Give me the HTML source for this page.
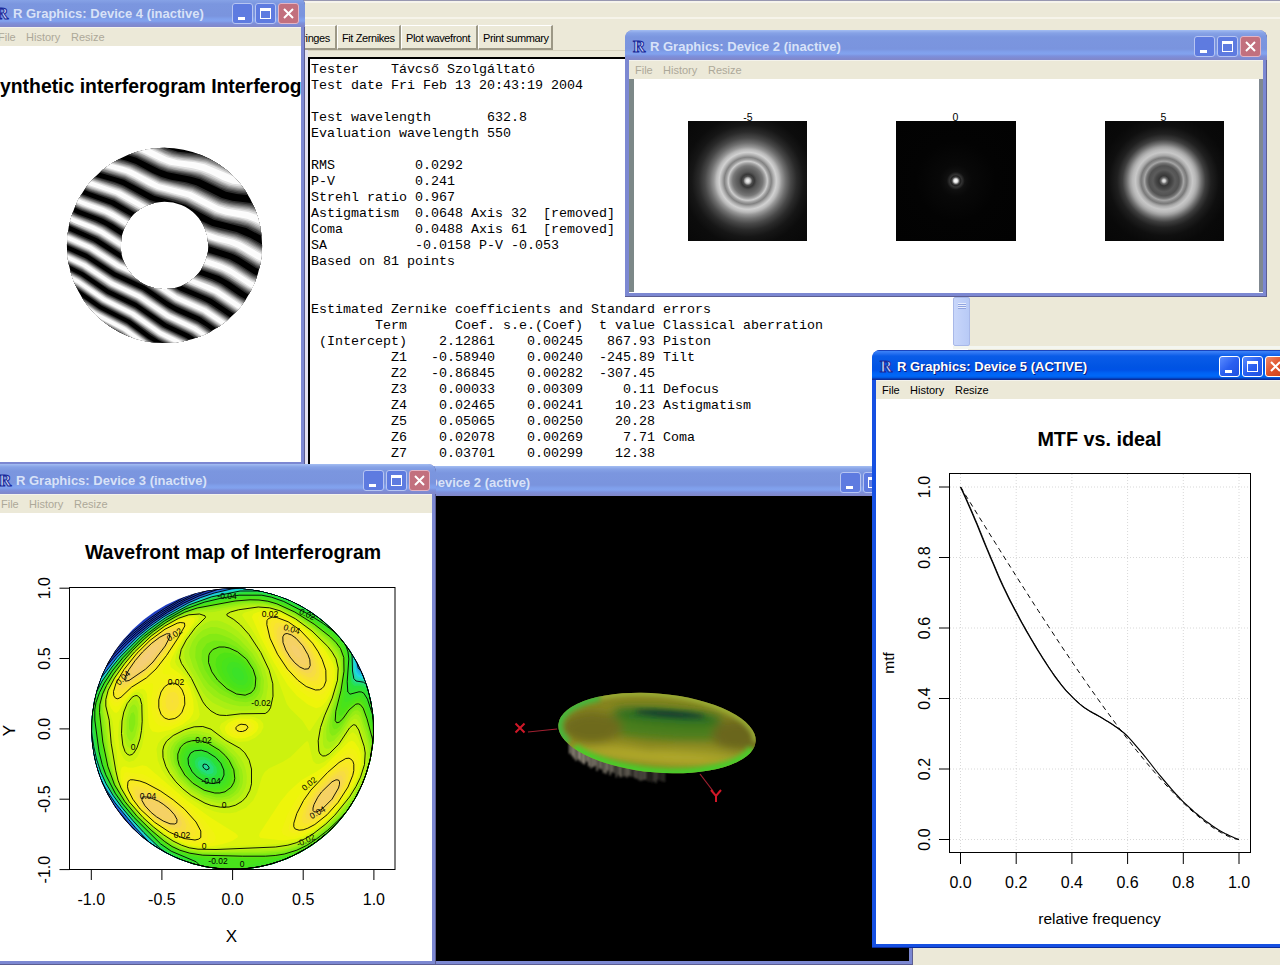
<!DOCTYPE html><html><head><meta charset="utf-8"><style>*{margin:0;padding:0;box-sizing:border-box}
html,body{width:1280px;height:965px;overflow:hidden;background:#ECE9D8;font-family:"Liberation Sans",sans-serif;position:relative}
.a{position:absolute}
.win{position:absolute;overflow:hidden;border-radius:8px 8px 0 0}
.win.in{background:#7C88D2;box-shadow:inset -1px -1px 0 #5C5E92}
.win.ac{background:#1650E2;box-shadow:inset -1px -1px 0 #0A2A9A}
.tb{position:absolute;left:0;right:0;top:0;height:30px;border-radius:7px 7px 0 0}
.in .tb{background:linear-gradient(#A4BEF2 0px,#9AB4EE 1px,#86A2E6 3px,#7B96DF 7px,#7A94DE 19px,#80A0EC 22px,#82A2EE 24px,#7D90DC 26px,#8088CC 29px,#8088CC 30px)}
.ac .tb{background:linear-gradient(#1A44BE 0px,#1A44BE 1px,#3D84F8 1px,#2C74F2 3px,#0A5CE8 6px,#0054E3 17px,#0052E6 20px,#0062F4 23px,#0068F8 26px,#0054DC 28px,#0A2E9C 29px,#0A2E9C 30px)}
.ttl{position:absolute;left:25px;top:9px;font-weight:bold;font-size:13px;line-height:16px;white-space:nowrap}
.in .ttl{color:#D8E2F8}
.ac .ttl{color:#fff;text-shadow:1px 1px 0 #0A1A7A}
.ico{position:absolute;left:7px;top:8px;width:16px;height:16px}
.bt{position:absolute;top:6px;width:21px;height:21px;border-radius:3px}
.in .bt{background:#5E7BE0;border:1px solid #B7C5F2}
.in .bt.cl{background:#C2707E;border:1px solid #E2B4C4}
.ac .bt{background:linear-gradient(135deg,#5A8CFF,#2A5FF0 50%,#1F50E0);border:1px solid #fff}
.ac .bt.cl{background:linear-gradient(135deg,#F08A6A,#E0522A 50%,#C8401C);border:1px solid #fff}
.mn{position:absolute;left:4px;right:4px;top:30px;height:19px;background:#ECE9D8;border-top:1px solid #F4F3EC;font-size:11px;white-space:nowrap}
.mn span{position:absolute;top:3px;line-height:13px}
.in .mn span{color:#ACA899}
.ac .mn span{color:#000}
.ct{position:absolute;left:4px;right:4px;top:49px;bottom:4px;background:#fff;overflow:hidden}
.mono{font-family:"Liberation Mono",monospace;font-size:13.33px;line-height:16px;white-space:pre;position:absolute;color:#000}
.xb{position:absolute;top:25px;height:25px;background:#ECE9D8;border-right:2px solid #9C9886;border-bottom:2px solid #9C9886;border-left:1px solid #fff;border-top:1px solid #fff;font-size:11px;line-height:24px;padding-left:4px;letter-spacing:-0.4px;white-space:nowrap;color:#000;overflow:hidden}
</style></head><body><div class="a" style="left:0;top:0;width:1280px;height:1px;background:#9898B0"></div>
<div class="a" style="left:0;top:1px;width:1280px;height:2px;background:#F6F4EC"></div>
<div class="a" style="left:0;top:17px;width:1280px;height:2px;background:#F6F4EA"></div>
<div class="a" style="left:290px;top:50px;width:680px;height:1px;background:#D8D4C0"></div>
<div class="xb" style="left:291px;width:46px">Fringes</div>
<div class="xb" style="left:337px;width:64px">Fit Zernikes</div>
<div class="xb" style="left:401px;width:77px">Plot wavefront</div>
<div class="xb" style="left:478px;width:75px">Print summary</div>
<div class="a" style="left:305px;top:50px;width:3px;height:420px;background:#E4E2F0"></div>
<div class="a" style="left:308px;top:57px;width:660px;height:410px;background:#fff;border-left:2px solid #000;border-top:2px solid #000"></div>
<div class="mono" style="left:311px;top:62px">Tester    Távcső Szolgáltató
Test date Fri Feb 13 20:43:19 2004

Test wavelength       632.8
Evaluation wavelength 550

RMS          0.0292
P-V          0.241
Strehl ratio 0.967
Astigmatism  0.0648 Axis 32  [removed]
Coma         0.0488 Axis 61  [removed]
SA           -0.0158 P-V -0.053
Based on 81 points


Estimated Zernike coefficients and Standard errors
        Term      Coef. s.e.(Coef)  t value Classical aberration
 (Intercept)    2.12861    0.00245   867.93 Piston
          Z1   -0.58940    0.00240  -245.89 Tilt
          Z2   -0.86845    0.00282  -307.45
          Z3    0.00033    0.00309     0.11 Defocus
          Z4    0.02465    0.00241    10.23 Astigmatism
          Z5    0.05065    0.00250    20.28
          Z6    0.02078    0.00269     7.71 Coma
          Z7    0.03701    0.00299    12.38</div>
<div class="a" style="left:953px;top:297px;width:17px;height:49px;background:linear-gradient(90deg,#C8D6FA,#B8CAF6);border:1px solid #A8B8E8;border-radius:2px"><div class="a" style="left:4px;top:5px;width:8px;height:1px;background:#E8EEFC;box-shadow:0 2px 0 #E8EEFC,0 4px 0 #E8EEFC,0 1px 0 #90A4E0,0 3px 0 #90A4E0,0 5px 0 #90A4E0"></div></div>
<div class="a" style="left:970px;top:297px;width:310px;height:50px;background:#ECE9D8"></div>
<div class="a" style="left:953px;top:346px;width:327px;height:3px;background:#F4F6F0"></div>
<div class="win in" style="left:-12px;top:-3px;width:317px;height:469px"><div class="tb"><svg class="ico" viewBox="0 0 16 16"><text x="1" y="14" font-family="Liberation Serif" font-weight="bold" font-size="17" fill="#C9D4F4" stroke="#1A2A9A" stroke-width="1">R</text></svg><div class="ttl">R Graphics: Device 4 (inactive)</div><div class="bt" style="right:52px"><div class="a" style="left:5px;top:13px;width:7px;height:3px;background:#fff"></div></div><div class="bt" style="right:29px"><div class="a" style="left:4px;top:4px;width:11px;height:11px;border:1px solid #fff;border-top-width:3px"></div></div><div class="bt cl" style="right:6px"><svg class="a" style="left:4px;top:4px" width="11" height="11"><path d="M1 1L10 10M10 1L1 10" stroke="#fff" stroke-width="2"/></svg></div></div><div class="mn"><span style="left:6px">File</span><span style="left:34px">History</span><span style="left:79px">Resize</span></div><div class="ct" style=""><svg class="a" style="left:8px;top:-46px" width="320" height="470" font-family="Liberation Sans"><defs><clipPath id="ring"><path d="M66.9 245.5a97.6 97.6 0 1 0 195.2 0a97.6 97.6 0 1 0 -195.2 0ZM120.7 245.5a43.8 43.8 0 1 1 87.6 0a43.8 43.8 0 1 1 -87.6 0Z" fill-rule="evenodd"/></clipPath></defs><g clip-path="url(#ring)" clip-rule="evenodd"><rect x="64" y="145" width="202" height="201" fill="#000"/><path d="M64.0 341.0 64.0 345.7 70.3 345.7ZM64.0 322.3 64.0 336.7 76.0 345.7 99.7 345.7 84.3 337.3ZM64.0 304.0 64.0 318.0 86.3 334.3 107.3 345.7 130.0 345.7 114.7 335.3 91.0 323.0ZM64.0 285.7 64.0 299.7 91.7 319.0 120.0 334.0 136.0 345.7 160.3 345.7 148.3 338.7 127.0 323.0 99.0 308.7 71.7 289.7ZM64.0 267.0 64.0 281.3 74.7 287.0 101.7 305.7 130.3 320.3 150.7 335.3 158.7 340.3 169.3 345.7 198.3 345.7 186.0 337.7 163.7 327.0 135.3 307.3 107.3 293.7 80.3 275.3ZM64.0 248.3 64.3 263.0 83.7 272.7 108.7 289.7 136.3 303.0 166.7 323.7 188.7 334.0 198.3 340.0 205.7 345.7 235.3 345.7 224.3 340.0 205.7 326.3 197.0 321.0 176.0 311.7 168.0 307.3 143.3 290.3 113.3 276.3 86.7 258.7ZM64.0 228.3 64.3 244.0 87.0 254.0 115.0 272.3 145.3 286.3 167.0 301.3 175.7 306.3 199.7 317.0 230.0 337.7 247.7 345.7 265.7 345.7 265.3 334.3 237.0 322.0 210.3 304.0 201.0 299.3 179.3 290.3 155.3 274.3 144.3 268.7 121.3 259.0 93.0 241.0ZM64.0 206.7 64.0 223.3 98.0 238.7 121.7 254.0 155.7 269.0 181.0 285.7 211.3 298.7 237.7 316.3 265.7 328.3 265.3 307.0 249.3 301.3 239.7 296.0 222.0 284.0 212.3 279.3 192.7 272.3 182.0 266.7 162.7 254.0 150.7 248.7 133.3 242.3 124.0 237.3 106.0 225.7 96.3 221.0 77.3 214.0ZM64.0 183.7 64.0 201.7 80.3 210.3 102.7 218.7 113.0 224.3 129.0 234.7 141.3 240.3 160.0 247.0 170.0 252.3 188.3 264.3 198.7 269.0 219.3 276.3 230.0 282.3 245.7 293.0 252.3 296.3 265.7 301.0 265.7 279.0 253.7 274.0 238.3 264.0 229.7 259.3 205.7 251.7 197.7 248.3 170.0 232.0 142.0 222.3 111.0 204.7 82.3 194.3ZM64.0 160.0 64.0 178.3 77.7 186.7 89.3 192.0 114.3 200.7 135.7 213.3 146.0 218.3 172.3 227.0 202.0 244.0 232.0 253.7 238.7 257.0 256.0 268.0 265.7 272.0 265.7 246.7 250.3 237.7 236.7 232.0 212.3 226.0 202.3 221.3 191.0 214.3 182.3 210.0 149.7 200.0 123.0 185.3 114.3 182.0 95.7 176.7 87.7 173.3ZM180.7 145.0 211.7 148.0 222.3 151.3 232.7 156.0 243.3 159.0 258.0 159.3 265.7 158.3 265.7 145.0ZM94.3 145.0 108.3 150.7 126.7 154.7 136.3 157.7 159.3 169.3 167.7 172.3 191.0 176.7 200.0 179.3 226.0 191.7 236.7 194.0 256.7 196.0 265.7 198.7 265.7 167.3 247.0 168.0 239.0 167.0 232.0 165.0 210.7 156.0 200.3 154.0 178.0 151.7 170.0 149.3 160.7 145.0ZM64.0 145.0 64.3 155.0 71.7 158.3 88.3 168.0 101.0 173.0 123.7 179.7 154.0 195.7 185.3 204.7 213.7 219.7 246.3 228.0 265.7 238.3 265.7 208.0 263.3 206.7 253.0 203.3 232.3 200.7 222.0 198.0 196.3 185.3 186.0 182.3 171.0 179.7 161.7 177.0 152.0 172.7 136.0 164.0 126.7 160.7 101.7 154.3 92.0 150.0 83.3 145.0Z" fill="rgb(44,44,44)" fill-rule="evenodd"/><path d="M64.0 342.0 64.0 345.7 69.0 345.7ZM64.0 323.3 64.0 335.7 76.7 345.3 98.0 345.7 84.0 338.0ZM64.0 305.0 64.0 317.3 85.7 333.0 109.0 345.7 128.7 345.7 116.0 337.0 89.0 322.7ZM64.0 286.3 64.0 298.7 90.0 317.0 121.0 333.7 137.3 345.7 158.3 345.7 148.3 339.7 127.0 324.0 99.7 310.0 73.3 291.7ZM64.0 268.0 64.3 280.7 76.7 287.3 101.0 304.3 130.3 319.3 158.7 339.3 171.3 345.7 197.0 345.7 184.0 337.7 163.0 327.7 136.3 309.0 105.7 293.7 82.0 277.3ZM64.0 249.3 64.0 262.0 82.0 270.7 108.0 288.3 136.3 302.0 164.3 321.3 190.0 333.7 207.3 345.7 233.0 345.7 224.0 341.0 198.0 322.7 178.0 313.7 165.7 307.0 142.0 290.7 113.3 277.3 84.3 258.3ZM64.0 229.3 64.3 243.0 87.0 253.0 115.7 271.7 144.3 284.7 173.3 304.0 201.7 317.0 230.3 336.7 250.0 345.7 265.7 345.7 265.7 336.0 264.3 335.0 235.3 322.3 206.3 303.0 180.3 292.0 151.0 273.0 120.0 259.3 96.0 243.7ZM64.0 208.0 64.0 222.3 95.7 236.3 123.7 254.0 155.3 267.7 181.3 284.7 213.0 298.3 240.0 316.3 265.7 327.0 265.3 308.3 249.3 302.7 239.0 297.0 219.7 284.0 189.3 272.0 161.7 254.7 131.7 242.7 103.3 225.3 77.3 215.0ZM64.0 185.0 64.0 200.7 71.3 205.0 79.7 209.0 101.3 217.0 111.7 222.3 128.7 233.3 136.7 237.3 160.3 246.0 169.3 250.7 187.7 262.7 198.3 267.7 220.0 275.3 228.0 279.7 247.0 292.3 255.7 296.3 265.7 299.7 265.7 280.3 253.3 275.3 238.0 265.3 228.0 260.0 204.0 252.3 197.0 249.3 177.7 237.3 168.7 232.7 139.3 222.3 110.7 205.7 83.7 196.0ZM64.0 161.3 64.0 177.3 77.3 185.3 88.7 190.7 114.0 199.3 136.7 212.7 145.7 217.0 173.0 226.0 201.3 242.3 233.0 252.7 241.3 257.0 257.0 267.0 265.7 270.7 265.7 248.3 250.3 239.3 237.3 233.7 219.7 229.7 210.3 226.7 183.0 211.7 175.0 208.7 151.3 202.0 141.7 197.3 124.7 187.3 117.7 184.3 91.0 176.0ZM194.0 145.0 205.0 145.3 213.7 146.7 221.3 149.0 233.7 154.3 243.0 157.0 255.0 157.7 265.7 156.7 265.7 145.0ZM97.0 145.0 109.0 149.7 126.3 153.3 136.3 156.3 159.7 168.0 166.7 170.7 191.7 175.3 200.7 178.0 219.3 187.3 227.0 190.3 238.7 192.7 255.3 194.0 265.7 196.7 265.7 169.3 245.3 169.7 236.7 168.3 210.3 157.7 198.7 155.3 178.7 153.3 167.7 150.0 157.7 145.0ZM64.0 145.0 64.0 153.7 72.0 157.3 92.3 168.7 125.0 179.0 146.7 191.0 155.7 195.0 175.3 200.0 186.3 203.7 214.0 218.3 225.7 221.7 241.0 224.7 248.0 227.0 265.7 236.7 265.7 209.7 251.3 204.7 233.0 202.3 220.3 199.0 194.0 186.0 184.3 183.3 168.0 180.3 160.7 178.0 134.3 164.7 123.3 161.0 102.0 155.7 89.0 149.7 81.0 145.0Z" fill="rgb(74,74,74)" fill-rule="evenodd"/><path d="M64.0 342.7 64.0 345.7 68.0 345.7ZM64.0 324.0 64.0 335.0 78.3 345.7 96.7 345.7 83.3 338.3ZM64.0 305.7 64.0 316.7 84.7 331.7 110.0 345.7 127.3 345.7 114.7 337.0 87.3 322.3ZM64.0 287.0 64.0 298.0 73.0 303.7 90.7 316.7 120.7 332.7 138.3 345.7 157.0 345.7 150.0 341.7 127.3 325.0 98.3 310.0 77.7 295.3ZM64.0 268.7 64.0 279.7 77.3 287.0 102.3 304.3 130.0 318.3 158.3 338.3 173.0 345.7 195.7 345.7 187.3 340.3 161.0 327.3 135.0 309.0 106.0 294.7 80.7 277.3ZM64.0 250.0 64.3 261.3 81.7 269.7 103.3 284.7 111.3 289.3 136.7 301.3 163.0 319.7 191.0 333.3 200.3 339.3 208.3 345.7 231.0 345.7 219.0 338.7 200.3 325.0 168.0 309.3 141.7 291.3 113.0 278.0 87.0 260.7ZM64.0 230.0 64.3 242.3 86.7 252.0 116.0 271.0 145.3 284.3 172.0 302.3 201.7 316.0 229.7 335.3 252.3 345.7 265.7 345.7 265.3 336.7 234.7 323.0 207.0 304.3 177.3 291.3 152.3 274.7 143.7 270.3 123.3 262.0 95.0 244.0ZM64.0 208.7 64.0 221.7 97.3 236.3 121.7 252.0 157.0 267.7 180.7 283.3 213.0 297.3 237.7 314.0 265.7 326.0 265.3 309.3 247.7 303.0 239.3 298.3 220.7 285.7 211.7 281.3 189.3 273.0 161.7 255.7 152.3 251.3 133.3 244.3 121.7 238.0 105.3 227.3 93.3 221.7 74.7 214.7ZM64.0 185.7 64.0 199.7 69.3 203.0 81.7 209.0 103.3 217.0 112.7 222.0 131.0 233.7 139.7 237.7 160.3 245.0 172.7 251.7 188.3 262.0 198.3 266.7 218.7 273.7 229.3 279.3 247.3 291.3 265.7 298.7 265.3 281.3 252.3 276.0 236.0 265.3 227.7 261.0 199.0 251.3 169.3 234.0 138.7 223.0 116.0 209.3 105.3 204.3 81.7 196.0ZM64.0 162.3 64.0 176.3 79.7 185.7 91.0 190.7 114.7 198.7 137.3 212.0 145.7 216.0 168.0 223.0 175.3 226.0 202.3 241.7 235.0 252.3 256.3 265.3 265.7 269.3 265.7 249.7 249.0 240.0 237.7 235.0 218.0 230.3 208.3 227.0 182.7 212.7 172.7 209.0 160.3 206.0 149.7 202.3 121.0 186.7 90.3 176.7ZM211.0 145.0 219.3 146.7 234.7 153.0 242.7 155.3 257.0 156.0 265.7 155.0 265.7 145.0ZM99.3 145.0 110.3 149.0 125.0 152.0 137.7 155.7 158.7 166.3 168.3 170.0 191.0 174.0 200.7 176.7 221.0 186.7 228.3 189.3 238.7 191.3 256.0 192.7 265.7 195.0 265.7 171.0 243.7 171.0 237.3 170.0 227.3 166.7 210.0 159.0 201.3 157.0 183.3 155.3 173.7 153.3 164.7 150.0 155.0 145.0ZM64.0 145.0 64.0 152.7 72.0 156.3 92.3 167.7 102.3 171.3 124.3 177.7 155.0 193.7 186.0 202.3 214.7 217.3 248.0 225.7 257.0 230.0 265.7 235.3 265.7 211.3 251.0 206.0 229.7 203.0 220.3 200.3 193.3 187.0 162.0 179.7 133.3 165.3 125.7 162.7 101.0 156.3 92.0 152.3 79.0 145.0Z" fill="rgb(104,104,104)" fill-rule="evenodd"/><path d="M64.0 343.3 64.0 345.7 67.3 345.7ZM64.0 324.7 64.0 334.3 79.3 345.7 95.7 345.7 82.3 338.3ZM64.0 306.3 64.0 316.0 87.3 332.7 111.3 345.7 126.3 345.7 116.3 338.7 88.3 323.7ZM64.0 287.7 64.0 297.3 93.3 317.7 122.3 333.0 139.3 345.7 155.7 345.7 147.0 340.3 126.7 325.3 95.0 308.7 75.7 294.7ZM64.0 269.3 64.0 279.0 75.3 285.0 100.7 302.7 130.7 318.0 150.7 332.7 159.7 338.3 174.3 345.7 194.3 345.7 184.7 339.7 161.3 328.3 135.3 310.0 124.3 304.0 107.7 296.3 98.3 290.7 79.0 277.0ZM64.0 250.7 64.3 260.7 82.3 269.3 109.0 287.3 136.3 300.3 161.7 318.0 193.0 333.7 209.7 345.7 229.3 345.7 218.7 339.3 198.3 324.7 170.7 311.7 142.0 292.3 114.7 279.7 85.7 260.7ZM64.0 231.0 64.0 241.3 88.7 252.3 115.7 270.0 145.0 283.3 175.3 303.3 202.0 315.3 231.3 335.3 254.0 345.7 265.7 345.7 265.3 337.7 235.3 324.3 208.3 306.0 177.0 292.0 152.0 275.3 119.3 260.7 93.0 243.7ZM64.0 209.7 64.0 221.0 100.0 237.0 125.7 253.3 155.0 265.7 182.3 283.3 212.3 296.0 240.7 314.7 265.7 325.0 265.3 310.3 247.7 304.0 237.7 298.3 220.7 286.7 212.7 282.7 191.0 274.7 181.0 269.3 159.3 255.3 133.7 245.3 124.0 240.3 105.0 228.0 94.7 223.0 76.0 216.0ZM64.0 186.7 64.0 198.7 72.0 203.7 80.3 207.7 103.7 216.3 114.7 222.3 129.0 231.7 137.7 236.0 162.3 245.0 171.0 249.7 188.3 261.0 199.0 266.0 214.3 271.0 223.0 274.7 248.7 291.0 257.7 295.0 265.7 297.3 265.7 282.7 252.7 277.3 231.7 264.0 221.7 259.7 199.0 252.3 168.7 234.7 140.3 224.7 109.7 207.0 81.3 196.7ZM64.0 163.0 64.0 175.3 80.7 185.3 89.7 189.3 114.3 197.7 144.7 214.7 175.3 225.0 197.7 238.3 204.7 241.7 233.7 250.7 241.0 254.3 256.7 264.3 265.7 268.3 265.7 251.0 247.3 240.3 234.0 235.0 219.0 231.7 207.3 227.7 181.0 213.0 149.0 203.0 124.0 189.0 114.3 185.0 90.7 177.7ZM217.7 145.0 222.7 146.3 234.3 151.3 243.7 154.0 255.7 154.7 265.7 153.7 265.7 145.0ZM101.7 145.0 110.0 148.0 127.7 151.7 137.7 154.7 159.7 165.7 168.7 169.0 189.7 172.7 200.3 175.3 228.0 188.0 237.7 190.0 258.0 191.7 265.7 193.7 265.7 172.3 244.0 172.3 237.3 171.3 228.7 168.7 215.3 162.3 206.7 159.3 197.7 157.7 182.7 156.3 172.0 154.0 152.3 145.0ZM64.0 145.0 64.0 152.0 73.7 156.3 91.3 166.3 103.0 170.7 125.0 177.0 134.0 181.3 146.3 188.7 157.7 193.7 178.0 198.7 187.0 201.7 215.0 216.3 225.3 219.3 238.7 221.7 248.7 224.7 265.7 233.7 265.7 213.0 261.3 210.7 248.3 206.7 234.7 205.0 223.7 202.7 217.3 200.3 201.3 191.7 192.0 187.7 161.0 180.3 131.7 165.7 100.3 157.0 88.3 151.3 77.3 145.0Z" fill="rgb(133,133,133)" fill-rule="evenodd"/><path d="M64.0 344.0 64.0 345.7 66.3 345.7ZM64.0 325.3 64.0 333.7 80.3 345.7 94.3 345.7 79.3 337.0ZM64.0 307.0 64.0 315.3 84.7 330.3 112.3 345.7 125.7 345.7 116.3 339.3 88.3 324.3ZM64.0 288.3 64.3 297.0 74.0 303.0 92.3 316.3 121.3 331.7 140.3 345.7 154.3 345.7 147.3 341.3 127.7 326.7 96.0 310.0 78.0 297.0ZM64.0 270.0 64.0 278.3 78.0 286.0 101.3 302.3 131.3 317.7 158.7 337.0 176.0 345.7 193.0 345.7 185.7 341.0 162.3 329.7 134.7 310.3 107.0 296.7 80.0 278.3ZM64.0 251.3 64.3 260.0 83.0 269.0 110.3 287.3 137.0 300.0 164.0 318.7 192.7 332.7 210.7 345.7 227.7 345.7 218.3 340.0 198.0 325.3 171.0 312.7 140.7 292.3 112.7 279.3 85.0 261.0ZM64.0 231.7 64.0 240.7 90.0 252.3 117.0 270.0 147.0 283.7 175.0 302.3 202.3 314.7 232.3 335.0 256.0 345.7 265.7 345.7 265.7 339.0 263.7 337.7 234.3 324.7 207.3 306.3 176.7 292.7 154.0 277.3 145.3 272.7 120.3 262.0 94.7 245.3ZM64.0 210.3 64.0 220.0 65.3 221.0 99.0 235.7 124.7 252.0 155.3 265.0 183.3 283.0 206.7 292.3 214.0 296.0 239.3 313.0 265.7 324.0 265.3 311.3 245.0 303.7 218.3 286.3 209.7 282.3 192.0 276.0 181.7 270.7 162.0 257.7 152.3 253.0 133.3 246.0 124.3 241.3 101.7 227.0 75.0 216.3ZM64.0 187.7 64.0 198.0 71.0 202.3 83.0 208.0 104.0 215.7 115.0 221.7 129.3 231.0 141.3 236.7 162.0 244.0 172.0 249.3 190.0 261.0 199.7 265.3 219.3 272.0 229.0 277.0 250.0 290.7 265.7 296.7 265.7 283.7 258.0 281.0 251.3 277.7 233.3 266.0 222.7 261.0 198.3 253.0 189.0 248.0 174.7 238.7 166.7 234.7 140.7 225.7 110.0 208.0 83.3 198.3ZM64.0 164.0 64.0 174.7 81.0 184.7 90.0 188.7 109.0 194.7 117.0 198.0 138.3 210.7 146.0 214.3 170.3 222.0 176.7 224.7 196.0 236.3 204.7 240.7 234.7 250.0 257.0 263.3 265.7 267.3 265.7 252.3 245.7 240.7 236.0 236.7 219.0 232.7 208.0 229.0 181.0 214.0 148.3 203.7 121.3 188.7 88.0 177.3ZM222.3 145.0 235.0 150.0 244.3 152.7 254.0 153.3 265.7 152.0 265.7 145.0ZM104.0 145.0 109.7 147.0 127.3 150.7 138.7 154.0 161.3 165.3 167.7 167.7 175.7 169.7 195.0 172.7 202.7 175.0 221.7 184.3 230.0 187.3 239.3 189.0 258.0 190.3 265.7 192.0 265.7 173.7 244.3 173.7 237.3 172.7 230.3 170.7 207.0 160.7 196.7 158.7 180.0 157.0 172.7 155.3 165.3 152.7 150.0 145.0ZM64.0 145.0 64.0 151.0 74.7 156.0 93.3 166.3 125.7 176.3 153.3 191.0 163.0 194.3 185.3 200.0 214.3 215.0 222.7 217.7 239.0 220.7 248.3 223.3 265.7 232.3 265.7 214.3 259.7 211.3 249.0 208.0 230.0 205.3 219.3 202.3 192.7 189.0 160.0 181.0 130.0 166.0 100.7 158.0 89.7 153.0 75.3 145.0Z" fill="rgb(163,163,163)" fill-rule="evenodd"/><path d="M64.0 344.7 64.0 345.7 65.3 345.7ZM64.0 326.0 64.0 333.0 81.3 345.7 93.0 345.7 79.3 337.7ZM64.0 307.7 64.0 314.7 87.3 331.3 113.7 345.7 124.7 345.7 111.7 337.3 88.3 325.0ZM64.0 289.0 64.3 296.3 72.7 301.3 92.3 315.7 123.0 332.0 141.3 345.7 153.0 345.7 127.0 327.0 94.3 309.7 76.0 296.3ZM64.0 270.7 64.0 277.7 76.0 284.0 102.0 302.0 129.3 315.7 157.7 335.7 177.3 345.7 192.0 345.7 183.0 340.3 161.0 329.7 134.0 310.7 105.7 296.7 79.3 278.7ZM64.0 252.0 64.3 259.3 82.0 267.7 108.7 285.7 136.7 299.0 163.7 317.7 193.0 332.0 212.0 345.7 226.0 345.7 196.0 325.0 168.3 312.0 141.0 293.3 114.3 281.0 86.0 262.3ZM64.0 232.3 64.0 240.0 89.0 251.0 116.0 268.7 138.0 278.3 149.0 284.0 175.3 301.7 203.3 314.3 230.3 333.0 257.7 345.7 265.7 345.7 265.7 340.0 263.7 338.7 235.0 326.0 206.3 306.7 176.3 293.3 149.0 275.3 120.7 263.0 92.0 244.7ZM64.0 211.0 64.3 219.7 73.7 224.3 98.7 234.7 124.3 251.0 156.3 264.7 181.3 281.0 213.3 294.7 239.3 312.0 265.7 323.0 265.3 312.3 251.7 307.7 244.3 304.3 219.0 287.7 210.7 283.7 190.0 276.0 180.7 271.0 161.0 258.0 152.7 254.0 133.0 246.7 120.7 240.0 102.0 228.0 73.3 216.3ZM64.0 188.3 64.0 197.0 71.3 201.7 81.7 206.7 104.3 215.0 137.0 234.0 164.0 244.0 189.3 259.7 200.3 264.7 223.0 272.7 247.7 288.3 256.0 292.3 265.7 295.3 265.7 284.7 259.3 282.7 251.7 279.0 232.0 266.3 222.7 262.0 197.7 253.7 169.0 236.7 138.7 225.7 112.3 210.0 103.3 206.0 80.0 197.7ZM64.0 164.7 64.0 173.7 77.7 182.0 91.3 188.3 115.3 196.3 145.0 213.0 176.7 223.7 204.0 239.3 235.7 249.3 258.0 262.7 265.7 266.0 265.7 253.7 247.7 243.0 235.7 237.7 210.3 231.0 201.7 227.0 186.3 217.7 179.3 214.3 150.0 205.3 120.0 189.0 89.0 178.7ZM226.7 145.0 235.7 148.7 245.7 151.3 257.7 151.7 265.7 150.7 265.7 145.0ZM106.3 145.0 137.0 152.3 144.3 155.3 158.0 162.7 169.0 167.0 199.3 172.7 228.7 185.7 238.3 187.7 255.0 188.7 265.7 190.7 265.7 175.3 244.7 175.0 234.3 173.3 206.0 161.7 173.3 156.7 165.7 154.0 147.3 145.0ZM64.0 145.0 64.3 150.3 72.7 154.0 94.7 166.0 124.7 175.0 134.7 179.7 147.7 187.3 156.7 191.3 184.7 198.7 197.0 204.3 214.7 214.0 226.0 217.3 245.0 221.0 252.3 223.7 265.7 231.0 265.7 215.7 258.7 212.3 249.3 209.3 231.0 206.7 219.7 203.7 192.3 190.0 160.0 182.0 130.0 167.0 106.0 160.7 96.7 157.3 74.3 145.3Z" fill="rgb(193,193,193)" fill-rule="evenodd"/><path d="M64.0 327.0 64.0 332.3 75.3 341.0 82.7 345.7 92.0 345.7 83.3 341.0ZM64.0 308.3 64.0 313.7 86.3 330.0 114.7 345.7 123.3 345.7 110.3 337.3 87.7 325.3ZM64.0 290.0 64.0 295.3 71.3 299.7 92.0 314.7 122.7 331.0 142.0 345.3 151.7 345.7 124.7 326.3 98.0 312.7 76.3 297.3ZM64.0 271.7 64.0 277.0 76.7 283.7 103.3 302.0 130.7 315.7 159.7 336.0 179.0 345.7 190.7 345.7 182.7 341.0 161.3 330.7 135.3 312.3 106.7 298.0 77.0 278.0ZM64.0 252.7 64.3 258.7 81.7 266.7 111.3 286.3 137.0 298.3 166.3 318.3 185.0 327.0 196.7 333.3 213.3 345.7 224.3 345.7 196.7 326.3 170.3 314.0 140.7 294.0 114.7 282.0 107.7 278.0 86.3 263.3ZM64.0 233.0 64.3 239.3 88.7 250.0 117.0 268.3 147.7 282.3 173.3 299.7 202.7 313.0 234.0 334.0 259.7 345.7 265.7 345.7 265.7 341.0 257.0 336.3 235.0 327.0 206.3 307.7 177.0 294.7 150.3 277.0 119.7 263.3 91.7 245.3ZM64.0 212.0 64.0 218.3 99.7 234.3 123.0 249.3 158.0 264.7 180.7 279.7 188.7 283.7 214.0 294.0 240.7 311.7 265.7 322.0 265.7 313.7 252.3 309.0 242.3 304.3 217.0 287.7 190.0 277.0 180.7 272.0 161.0 259.0 152.0 254.7 131.0 246.7 121.3 241.3 104.0 230.0 93.7 225.0 73.7 217.3ZM64.0 189.3 64.0 196.3 72.3 201.3 81.3 205.7 107.0 215.3 128.0 228.3 137.7 233.3 164.0 243.0 173.7 248.3 190.7 259.3 200.3 263.7 221.0 270.7 231.0 276.0 248.0 287.3 256.3 291.3 265.7 294.3 265.3 285.7 257.3 283.0 250.7 279.7 231.7 267.3 219.7 262.0 199.0 255.3 166.0 236.3 137.3 226.0 113.0 211.3 102.7 206.7 81.0 199.0ZM64.0 165.7 64.3 173.0 84.7 184.7 116.0 195.7 138.3 208.7 146.7 212.7 175.3 222.0 205.0 238.7 235.3 248.0 242.7 251.7 257.3 261.0 265.7 264.7 265.3 254.7 240.3 240.7 231.7 237.7 216.0 234.0 206.7 230.7 180.7 216.0 148.3 205.7 120.0 190.0 87.7 179.0ZM231.0 145.0 241.0 148.7 248.0 150.0 258.7 150.0 265.7 149.0 265.7 145.0ZM109.7 145.0 138.3 151.7 160.7 162.7 169.7 166.0 200.3 171.7 208.3 174.7 222.7 182.0 230.0 184.7 238.3 186.3 256.0 187.3 265.7 189.0 265.7 176.7 243.7 176.3 235.0 175.0 227.0 172.3 214.0 166.0 204.7 162.7 193.7 160.7 182.3 159.7 170.3 157.0 144.3 145.0ZM64.0 145.0 64.0 149.3 72.7 153.0 94.7 165.0 125.7 174.3 156.0 190.0 188.7 199.0 215.3 213.0 225.3 216.0 239.3 218.3 250.0 221.3 258.0 225.0 265.7 229.7 265.7 217.3 258.3 213.7 249.3 210.7 226.7 207.0 218.0 204.3 191.7 191.0 159.7 183.0 129.0 167.7 100.0 159.7 89.7 155.0 71.3 145.0Z" fill="rgb(223,223,223)" fill-rule="evenodd"/><path d="M64.0 327.7 64.0 331.3 75.7 340.3 84.0 345.7 90.3 345.7 77.0 337.7ZM64.0 309.3 64.0 313.0 85.7 328.7 116.3 345.7 122.0 345.7 111.7 339.0 88.3 326.7ZM64.0 290.7 64.3 294.7 73.7 300.3 90.3 312.7 101.0 319.0 123.7 330.7 143.3 345.3 150.3 345.7 126.3 328.3 95.3 312.0 74.0 296.7ZM64.0 272.3 64.3 276.3 77.7 283.3 102.7 300.7 130.7 314.7 159.7 335.0 181.0 345.7 188.7 345.7 180.7 341.0 160.7 331.3 133.7 312.3 104.3 297.7 78.7 280.0ZM64.0 253.7 64.3 257.7 83.3 266.7 111.3 285.3 139.3 298.7 167.0 317.7 193.0 330.0 202.3 336.0 215.0 345.7 222.7 345.7 195.3 326.7 169.0 314.3 140.0 294.7 111.0 281.0 86.3 264.3ZM64.0 234.0 64.3 238.3 89.3 249.3 117.7 267.7 146.7 280.7 176.0 300.0 203.0 312.0 231.3 331.3 254.0 341.3 261.7 345.7 265.7 345.7 265.7 342.3 255.0 336.7 234.0 327.7 206.0 308.7 177.3 296.0 149.0 277.3 119.0 264.0 91.0 246.0ZM64.0 213.0 64.0 217.3 74.0 222.7 90.7 229.0 101.0 234.0 124.3 249.0 158.3 263.7 181.7 279.0 215.7 293.7 240.0 310.0 265.7 320.7 265.7 315.0 251.7 310.0 242.3 305.7 217.7 289.3 209.3 285.3 190.3 278.3 181.3 273.7 160.7 260.0 151.0 255.3 133.0 248.7 122.7 243.3 102.0 230.0 93.7 226.0 73.7 218.3ZM64.0 190.3 64.0 195.0 73.7 201.0 85.7 206.3 104.3 213.0 114.0 218.0 128.3 227.3 138.7 232.7 163.0 241.3 173.7 247.0 190.0 257.7 198.3 261.7 221.7 269.7 230.7 274.3 250.0 287.0 259.0 291.0 265.7 293.0 265.3 287.0 259.7 285.3 251.0 281.3 229.7 267.7 220.7 263.7 198.3 256.3 189.3 251.7 175.7 242.7 167.0 238.0 137.7 227.3 113.3 212.7 103.3 208.0 82.3 200.7 72.3 195.7ZM64.0 167.0 64.0 171.7 85.7 184.0 115.7 194.3 146.3 211.3 175.3 220.7 204.3 237.0 214.7 240.7 229.3 244.3 238.0 247.7 256.7 259.0 265.7 263.3 265.3 256.3 241.3 242.7 233.7 239.7 218.3 236.0 207.3 232.3 181.3 217.7 171.0 213.7 157.0 210.0 147.0 206.3 121.0 191.7 87.3 180.0ZM236.3 145.0 248.0 148.0 259.3 148.0 265.7 147.0 265.7 145.0ZM114.3 145.0 128.7 147.7 139.3 150.7 160.3 161.0 170.0 164.7 192.7 168.3 202.3 170.7 210.7 174.0 223.0 180.3 232.7 183.7 265.7 187.0 265.7 178.7 243.0 178.0 233.3 176.3 204.7 164.3 195.0 162.3 177.7 160.3 167.0 157.3 147.3 147.7 140.0 145.0ZM64.0 145.0 64.3 148.3 73.7 152.3 88.7 161.0 96.7 164.7 126.3 173.3 133.7 176.7 148.7 185.3 157.7 189.3 188.0 197.3 216.7 212.0 226.0 214.7 247.0 218.7 257.0 222.7 265.7 227.7 265.7 219.3 258.0 215.3 248.0 212.0 227.3 208.7 218.3 206.0 191.3 192.3 158.7 184.0 132.3 170.3 124.3 167.3 100.3 161.0 87.3 155.0 68.7 145.0Z" fill="rgb(252,252,252)" fill-rule="evenodd"/></g><text x="162.1" y="92.5" font-size="19.4" font-weight="bold" text-anchor="middle">Synthetic interferogram Interferogram</text></svg></div></div>
<div class="win in" style="left:625px;top:30px;width:642px;height:267px"><div class="tb"><svg class="ico" viewBox="0 0 16 16"><text x="1" y="14" font-family="Liberation Serif" font-weight="bold" font-size="17" fill="#C9D4F4" stroke="#1A2A9A" stroke-width="1">R</text></svg><div class="ttl">R Graphics: Device 2 (inactive)</div><div class="bt" style="right:52px"><div class="a" style="left:5px;top:13px;width:7px;height:3px;background:#fff"></div></div><div class="bt" style="right:29px"><div class="a" style="left:4px;top:4px;width:11px;height:11px;border:1px solid #fff;border-top-width:3px"></div></div><div class="bt cl" style="right:6px"><svg class="a" style="left:4px;top:4px" width="11" height="11"><path d="M1 1L10 10M10 1L1 10" stroke="#fff" stroke-width="2"/></svg></div></div><div class="mn"><span style="left:6px">File</span><span style="left:34px">History</span><span style="left:79px">Resize</span></div><div class="ct" style=""><svg class="a" style="left:-629px;top:-79px" width="1280" height="300" font-family="Liberation Sans"><defs><radialGradient id="p1" gradientUnits="userSpaceOnUse" cx="0" cy="0" r="85"><stop offset="0.0000" stop-color="rgb(240,240,240)"/><stop offset="0.0176" stop-color="rgb(225,225,225)"/><stop offset="0.0353" stop-color="rgb(170,170,170)"/><stop offset="0.0529" stop-color="rgb(80,80,80)"/><stop offset="0.0765" stop-color="rgb(55,55,55)"/><stop offset="0.1059" stop-color="rgb(85,85,85)"/><stop offset="0.1412" stop-color="rgb(100,100,100)"/><stop offset="0.1765" stop-color="rgb(120,120,120)"/><stop offset="0.2059" stop-color="rgb(160,160,160)"/><stop offset="0.2294" stop-color="rgb(205,205,205)"/><stop offset="0.2529" stop-color="rgb(160,160,160)"/><stop offset="0.2765" stop-color="rgb(130,130,130)"/><stop offset="0.3059" stop-color="rgb(175,175,175)"/><stop offset="0.3353" stop-color="rgb(210,210,210)"/><stop offset="0.3706" stop-color="rgb(185,185,185)"/><stop offset="0.4000" stop-color="rgb(150,150,150)"/><stop offset="0.4471" stop-color="rgb(110,110,110)"/><stop offset="0.5059" stop-color="rgb(72,72,72)"/><stop offset="0.5765" stop-color="rgb(42,42,42)"/><stop offset="0.6588" stop-color="rgb(22,22,22)"/><stop offset="0.7647" stop-color="rgb(12,12,12)"/><stop offset="1.0000" stop-color="rgb(8,8,8)"/></radialGradient><radialGradient id="p2" gradientUnits="userSpaceOnUse" cx="0" cy="0" r="85"><stop offset="0.0000" stop-color="rgb(255,255,255)"/><stop offset="0.0176" stop-color="rgb(240,240,240)"/><stop offset="0.0294" stop-color="rgb(180,180,180)"/><stop offset="0.0412" stop-color="rgb(80,80,80)"/><stop offset="0.0565" stop-color="rgb(30,30,30)"/><stop offset="0.0729" stop-color="rgb(50,50,50)"/><stop offset="0.0882" stop-color="rgb(35,35,35)"/><stop offset="0.1059" stop-color="rgb(16,16,16)"/><stop offset="0.1412" stop-color="rgb(12,12,12)"/><stop offset="0.1882" stop-color="rgb(8,8,8)"/><stop offset="0.4706" stop-color="rgb(3,3,3)"/><stop offset="1.0000" stop-color="rgb(2,2,2)"/></radialGradient><radialGradient id="p3" gradientUnits="userSpaceOnUse" cx="0" cy="0" r="85"><stop offset="0.0000" stop-color="rgb(235,235,235)"/><stop offset="0.0176" stop-color="rgb(200,200,200)"/><stop offset="0.0353" stop-color="rgb(110,110,110)"/><stop offset="0.0588" stop-color="rgb(55,55,55)"/><stop offset="0.0941" stop-color="rgb(70,70,70)"/><stop offset="0.1294" stop-color="rgb(92,92,92)"/><stop offset="0.1765" stop-color="rgb(82,82,82)"/><stop offset="0.2059" stop-color="rgb(115,115,115)"/><stop offset="0.2294" stop-color="rgb(165,165,165)"/><stop offset="0.2529" stop-color="rgb(135,135,135)"/><stop offset="0.2706" stop-color="rgb(122,122,122)"/><stop offset="0.3000" stop-color="rgb(170,170,170)"/><stop offset="0.3353" stop-color="rgb(200,200,200)"/><stop offset="0.3706" stop-color="rgb(185,185,185)"/><stop offset="0.4000" stop-color="rgb(160,160,160)"/><stop offset="0.4412" stop-color="rgb(110,110,110)"/><stop offset="0.4882" stop-color="rgb(62,62,62)"/><stop offset="0.5529" stop-color="rgb(32,32,32)"/><stop offset="0.6471" stop-color="rgb(15,15,15)"/><stop offset="0.7647" stop-color="rgb(9,9,9)"/><stop offset="1.0000" stop-color="rgb(7,7,7)"/></radialGradient></defs><g transform="translate(747.8,180.8)"><rect x="-59.799999999999955" y="-59.80000000000001" width="119" height="120" fill="url(#p1)"/></g><text x="748" y="121" font-size="10.5" text-anchor="middle">-5</text><g transform="translate(955.8,180.8)"><rect x="-59.799999999999955" y="-59.80000000000001" width="120" height="120" fill="url(#p2)"/></g><text x="955.5" y="121" font-size="10.5" text-anchor="middle">0</text><g transform="translate(1164,180.8)"><rect x="-59" y="-59.80000000000001" width="119" height="120" fill="url(#p3)"/></g><text x="1163.5" y="121" font-size="10.5" text-anchor="middle">5</text></svg><div class="a" style="left:0;top:0;width:5px;height:213px;background:#7C8888"></div><div class="a" style="right:0;top:0;width:4px;height:213px;background:#808890"></div></div></div>
<div class="win in" style="left:326px;top:466px;width:587px;height:499px"><div class="tb"><svg class="ico" viewBox="0 0 16 16"><text x="1" y="14" font-family="Liberation Serif" font-weight="bold" font-size="17" fill="#C9D4F4" stroke="#1A2A9A" stroke-width="1">R</text></svg><div class="ttl">R Graphics: Device 2 (active)</div><div class="bt" style="right:52px"><div class="a" style="left:5px;top:13px;width:7px;height:3px;background:#fff"></div></div><div class="bt" style="right:29px"><div class="a" style="left:4px;top:4px;width:11px;height:11px;border:1px solid #fff;border-top-width:3px"></div></div><div class="bt cl" style="right:6px"><svg class="a" style="left:4px;top:4px" width="11" height="11"><path d="M1 1L10 10M10 1L1 10" stroke="#fff" stroke-width="2"/></svg></div></div><div class="ct" style="top:30px;background:#000"><svg class="a" style="left:-330px;top:-496px" width="1280" height="965"><defs>
<filter id="bl1" x="-20%" y="-50%" width="140%" height="200%"><feGaussianBlur stdDeviation="0.8"/></filter>
<filter id="bl5" x="-30%" y="-50%" width="160%" height="200%"><feGaussianBlur stdDeviation="5"/></filter>
<filter id="bl3" x="-30%" y="-50%" width="160%" height="200%"><feGaussianBlur stdDeviation="2.5"/></filter>
<clipPath id="ec"><ellipse cx="657" cy="733" rx="99" ry="39.5" transform="rotate(5 657 733)"/></clipPath>
</defs><g filter="url(#bl1)"><line x1="569.8" y1="740.1" x2="569.8" y2="753.8" stroke="rgb(207,196,176)" stroke-width="1.2"/><line x1="572.2" y1="741.9" x2="572.2" y2="756.1" stroke="rgb(185,176,157)" stroke-width="1.2"/><line x1="573.9" y1="743.2" x2="573.9" y2="758.4" stroke="rgb(193,184,164)" stroke-width="1.2"/><line x1="576.1" y1="744.7" x2="576.1" y2="760.7" stroke="rgb(203,192,172)" stroke-width="1.2"/><line x1="578.6" y1="746.3" x2="578.6" y2="759.6" stroke="rgb(209,199,178)" stroke-width="1.2"/><line x1="580.3" y1="747.3" x2="580.3" y2="761.4" stroke="rgb(220,209,187)" stroke-width="1.2"/><line x1="582.6" y1="748.6" x2="582.6" y2="763.3" stroke="rgb(204,194,174)" stroke-width="1.2"/><line x1="584.4" y1="749.5" x2="584.4" y2="764.3" stroke="rgb(196,186,167)" stroke-width="1.2"/><line x1="586.7" y1="750.7" x2="586.7" y2="761.8" stroke="rgb(209,199,178)" stroke-width="1.2"/><line x1="588.9" y1="751.7" x2="588.9" y2="766.3" stroke="rgb(207,196,176)" stroke-width="1.2"/><line x1="591.1" y1="752.7" x2="591.1" y2="768.3" stroke="rgb(174,165,148)" stroke-width="1.2"/><line x1="593.3" y1="753.7" x2="593.3" y2="766.9" stroke="rgb(203,193,173)" stroke-width="1.2"/><line x1="595.4" y1="754.5" x2="595.4" y2="766.0" stroke="rgb(152,144,129)" stroke-width="1.2"/><line x1="597.1" y1="755.2" x2="597.1" y2="771.0" stroke="rgb(166,158,141)" stroke-width="1.2"/><line x1="599.5" y1="756.1" x2="599.5" y2="768.6" stroke="rgb(167,159,142)" stroke-width="1.2"/><line x1="601.4" y1="756.8" x2="601.4" y2="769.6" stroke="rgb(169,160,143)" stroke-width="1.2"/><line x1="603.7" y1="757.6" x2="603.7" y2="773.1" stroke="rgb(171,162,145)" stroke-width="1.2"/><line x1="606.0" y1="758.4" x2="606.0" y2="773.7" stroke="rgb(186,177,158)" stroke-width="1.2"/><line x1="607.9" y1="759.0" x2="607.9" y2="770.8" stroke="rgb(175,166,149)" stroke-width="1.2"/><line x1="610.2" y1="759.7" x2="610.2" y2="775.2" stroke="rgb(154,146,131)" stroke-width="1.2"/><line x1="612.1" y1="760.3" x2="612.1" y2="772.3" stroke="rgb(166,158,141)" stroke-width="1.2"/><line x1="614.1" y1="760.9" x2="614.1" y2="773.3" stroke="rgb(117,111,99)" stroke-width="1.2"/><line x1="616.4" y1="761.5" x2="616.4" y2="777.4" stroke="rgb(115,109,98)" stroke-width="1.2"/><line x1="618.5" y1="762.0" x2="618.5" y2="775.1" stroke="rgb(115,110,98)" stroke-width="1.2"/><line x1="620.3" y1="762.5" x2="620.3" y2="777.3" stroke="rgb(155,147,132)" stroke-width="1.2"/><line x1="622.2" y1="762.9" x2="622.2" y2="777.0" stroke="rgb(102,97,87)" stroke-width="1.2"/><line x1="624.7" y1="763.5" x2="624.7" y2="776.2" stroke="rgb(149,141,127)" stroke-width="1.2"/><line x1="627.0" y1="764.0" x2="627.0" y2="777.5" stroke="rgb(153,145,130)" stroke-width="1.2"/><line x1="628.7" y1="764.4" x2="628.7" y2="775.8" stroke="rgb(125,119,106)" stroke-width="1.2"/><line x1="630.6" y1="764.8" x2="630.6" y2="776.8" stroke="rgb(110,105,94)" stroke-width="1.2"/><line x1="633.1" y1="765.2" x2="633.1" y2="777.0" stroke="rgb(85,81,72)" stroke-width="1.2"/><line x1="635.3" y1="765.6" x2="635.3" y2="778.2" stroke="rgb(137,130,116)" stroke-width="1.2"/><line x1="637.4" y1="766.0" x2="637.4" y2="778.9" stroke="rgb(103,98,88)" stroke-width="1.2"/><line x1="639.3" y1="766.3" x2="639.3" y2="780.5" stroke="rgb(108,103,92)" stroke-width="1.2"/><line x1="641.4" y1="766.6" x2="641.4" y2="780.7" stroke="rgb(125,119,106)" stroke-width="1.2"/><line x1="643.5" y1="767.0" x2="643.5" y2="780.1" stroke="rgb(109,103,92)" stroke-width="1.2"/><line x1="645.4" y1="767.2" x2="645.4" y2="779.7" stroke="rgb(121,115,103)" stroke-width="1.2"/><line x1="647.7" y1="767.5" x2="647.7" y2="781.3" stroke="rgb(59,56,50)" stroke-width="1.2"/><line x1="649.7" y1="767.8" x2="649.7" y2="781.7" stroke="rgb(57,54,48)" stroke-width="1.2"/><line x1="652.0" y1="768.0" x2="652.0" y2="782.2" stroke="rgb(56,53,47)" stroke-width="1.2"/><line x1="654.1" y1="768.2" x2="654.1" y2="781.6" stroke="rgb(89,85,76)" stroke-width="1.2"/><line x1="656.0" y1="768.4" x2="656.0" y2="782.9" stroke="rgb(89,85,76)" stroke-width="1.2"/><line x1="657.9" y1="768.6" x2="657.9" y2="779.9" stroke="rgb(82,78,70)" stroke-width="1.2"/><line x1="660.6" y1="768.8" x2="660.6" y2="781.0" stroke="rgb(66,62,56)" stroke-width="1.2"/><line x1="662.5" y1="768.9" x2="662.5" y2="781.5" stroke="rgb(57,54,48)" stroke-width="1.2"/><line x1="664.4" y1="769.0" x2="664.4" y2="781.9" stroke="rgb(67,64,57)" stroke-width="1.2"/></g><ellipse cx="657" cy="733" rx="99" ry="39.5" transform="rotate(5 657 733)" fill="#86841F"/><g clip-path="url(#ec)"><g filter="url(#bl5)"><ellipse cx="660" cy="727" rx="85" ry="12" transform="rotate(4 660 727)" fill="#4A7E1E"/><ellipse cx="600" cy="748" rx="55" ry="9" transform="rotate(8 600 748)" fill="#9A9224"/><ellipse cx="700" cy="756" rx="60" ry="8" transform="rotate(2 700 756)" fill="#9C9A26"/><ellipse cx="668" cy="716" rx="55" ry="7" transform="rotate(4 668 716)" fill="#236A24"/><ellipse cx="592" cy="728" rx="30" ry="16" fill="#6E6A1E"/><ellipse cx="738" cy="735" rx="26" ry="16" fill="#6A661C"/><ellipse cx="655" cy="757" rx="80" ry="7" transform="rotate(5 655 757)" fill="#B0A82C"/></g><ellipse cx="670" cy="714" rx="35" ry="3" transform="rotate(4 670 714)" fill="#163A30" filter="url(#bl3)"/><ellipse cx="657" cy="733" rx="99" ry="39.5" transform="rotate(5 657 733)" fill="none" stroke="#48CC2A" stroke-width="10" filter="url(#bl3)" stroke-dasharray="0 8 190 276"/><ellipse cx="657" cy="733" rx="99" ry="39.5" transform="rotate(5 657 733)" fill="none" stroke="#9CB238" stroke-width="6" filter="url(#bl3)" stroke-dasharray="0 280 190 4"/><ellipse cx="657" cy="733" rx="99" ry="39.5" transform="rotate(5 657 733)" fill="none" stroke="#44B83C" stroke-width="9" filter="url(#bl3)" stroke-dasharray="0 205 75 194"/></g><line x1="528" y1="732" x2="557" y2="729" stroke="#A02030" stroke-width="1.2"/><path d="M515.5 723.5L524.5 732.5M524.5 723.5L515.5 732.5" stroke="#D01828" stroke-width="2"/><line x1="700" y1="774" x2="713" y2="791" stroke="#A02030" stroke-width="1.2"/><path d="M711 790L716 796L721 790M716 796L716 802" stroke="#D01828" stroke-width="2" fill="none"/></svg></div></div>
<div class="win in" style="left:-9px;top:464px;width:445px;height:501px"><div class="tb"><svg class="ico" viewBox="0 0 16 16"><text x="1" y="14" font-family="Liberation Serif" font-weight="bold" font-size="17" fill="#C9D4F4" stroke="#1A2A9A" stroke-width="1">R</text></svg><div class="ttl">R Graphics: Device 3 (inactive)</div><div class="bt" style="right:52px"><div class="a" style="left:5px;top:13px;width:7px;height:3px;background:#fff"></div></div><div class="bt" style="right:29px"><div class="a" style="left:4px;top:4px;width:11px;height:11px;border:1px solid #fff;border-top-width:3px"></div></div><div class="bt cl" style="right:6px"><svg class="a" style="left:4px;top:4px" width="11" height="11"><path d="M1 1L10 10M10 1L1 10" stroke="#fff" stroke-width="2"/></svg></div></div><div class="mn"><span style="left:6px">File</span><span style="left:34px">History</span><span style="left:79px">Resize</span></div><div class="ct" style=""><svg class="a" style="left:5px;top:-513px" width="1280" height="965" font-family="Liberation Sans"><defs><clipPath id="cc"><ellipse cx="232.6" cy="728.9" rx="141.3" ry="140.7"/></clipPath></defs><g clip-path="url(#cc)"><rect x="90" y="586" width="286" height="286" fill="#1e3cbe"/><path d="M215.2 590.5 196.8 597.2 180.8 605.0 153.5 622.0 139.8 632.8 125.2 646.0 113.2 658.8 102.8 671.8 95.8 682.2 90.0 693.5 90.5 760.0 99.2 781.8 114.8 805.8 143.8 840.2 168.0 863.2 175.0 871.8 299.8 871.8 325.2 857.0 342.0 845.2 362.2 827.8 375.8 813.5 375.8 682.8 371.5 672.5 363.0 664.0 360.8 660.2 356.8 640.5 352.5 631.5 342.8 622.0 326.0 611.0 294.8 594.8 283.8 590.2 269.2 586.0 233.5 586.0Z" fill="#265cd6" fill-rule="evenodd"/><path d="M216.2 590.8 200.2 596.2 181.5 605.0 153.8 622.2 130.8 641.2 114.5 658.0 103.0 672.2 95.5 683.8 90.0 695.0 90.0 755.8 95.8 773.0 100.2 782.5 106.2 792.8 116.5 807.2 147.5 843.5 166.2 860.2 176.2 871.8 298.0 871.8 322.0 858.0 340.5 845.2 358.8 829.8 375.8 812.0 375.8 685.2 370.0 672.2 362.0 665.2 360.0 661.8 356.2 641.2 352.2 632.5 342.8 623.0 325.0 611.2 289.0 593.0 277.2 588.8 266.0 586.0 237.0 586.0Z" fill="#2864dc" fill-rule="evenodd"/><path d="M285.2 592.2 274.0 588.5 261.5 586.0 237.8 586.5 220.0 590.2 205.5 594.8 179.5 606.5 163.5 616.0 148.0 627.0 133.8 639.0 121.5 651.0 110.0 664.0 101.5 675.2 95.0 685.8 90.0 696.5 90.0 753.0 94.5 768.2 98.2 777.2 109.5 796.8 127.0 819.5 149.5 844.8 168.2 861.0 177.5 871.8 295.8 871.8 321.5 857.2 339.0 845.2 361.0 826.2 375.8 810.2 375.8 688.0 373.0 680.0 369.5 673.5 362.8 668.2 359.5 664.0 355.5 641.2 352.8 634.8 349.5 630.2 340.5 622.2 325.2 612.2 310.0 603.8Z" fill="#267bdd" fill-rule="evenodd"/><path d="M282.0 591.8 269.2 588.0 260.0 586.5 246.0 586.2 237.0 587.2 217.5 591.5 205.5 595.2 190.2 601.5 177.5 608.0 163.8 616.2 148.2 627.2 124.2 648.8 113.8 660.2 103.0 674.0 95.8 685.5 90.2 697.5 90.0 750.0 95.2 768.5 101.5 782.5 114.0 802.2 130.0 822.2 146.8 841.0 157.0 851.0 169.0 860.5 178.8 871.8 293.8 871.8 319.8 857.2 338.8 844.2 358.2 827.5 375.8 808.5 375.8 690.5 372.0 680.0 368.2 674.0 359.5 667.2 357.5 660.8 356.2 648.2 354.0 639.2 351.0 633.5 344.8 626.8 335.2 619.5 319.0 609.5 298.5 598.8Z" fill="#2392de" fill-rule="evenodd"/><path d="M282.0 592.5 270.5 589.0 258.2 587.0 244.8 587.0 234.8 588.2 218.8 591.8 202.8 596.8 176.0 609.2 160.2 619.0 147.2 628.5 133.0 640.8 121.5 652.2 102.8 675.2 96.2 685.8 90.5 698.5 90.0 746.8 96.0 768.8 102.0 782.2 115.0 802.8 130.2 821.8 148.8 842.2 158.0 851.0 169.8 860.0 180.2 871.8 291.5 871.8 321.2 855.2 337.5 844.0 356.2 828.0 375.8 806.8 375.8 693.2 372.2 683.0 369.2 677.2 366.0 674.0 360.8 671.2 358.2 668.2 356.8 662.2 355.2 646.5 352.8 638.2 349.0 632.2 343.8 627.0 330.0 617.0 309.8 605.2Z" fill="#21a9df" fill-rule="evenodd"/><path d="M282.0 593.2 269.5 589.5 258.8 587.8 247.5 587.5 235.8 588.8 217.2 592.8 203.5 597.0 177.2 609.0 166.2 615.5 148.5 628.0 135.8 638.8 123.8 650.5 104.2 674.0 96.8 686.0 90.0 702.0 90.0 742.8 94.5 762.2 98.8 774.0 104.0 784.8 116.0 803.2 136.0 827.5 155.5 848.0 171.8 860.5 181.8 871.8 289.0 871.8 316.5 857.0 335.2 844.5 355.0 827.8 367.0 815.5 375.8 805.0 375.8 696.0 372.8 686.8 369.0 679.0 365.0 675.2 359.5 672.8 357.2 669.8 356.0 664.2 354.8 648.0 352.8 640.2 349.2 634.0 345.8 630.0 328.5 617.0 306.2 604.2Z" fill="#1fc0e0" fill-rule="evenodd"/><path d="M281.2 593.8 268.5 590.0 259.2 588.5 246.5 588.2 235.2 589.5 216.8 593.5 201.5 598.2 178.0 609.0 165.8 616.2 149.8 627.5 127.0 647.8 116.0 659.8 105.2 673.5 97.2 686.2 91.8 698.5 90.0 704.2 90.2 739.8 95.8 764.0 104.5 784.5 119.5 807.0 139.0 830.0 156.5 848.0 175.0 862.0 183.5 871.8 286.5 871.8 318.0 855.0 335.2 843.2 354.2 827.0 365.5 815.5 375.8 803.0 375.8 698.8 371.2 685.5 368.0 679.8 365.5 677.5 358.5 674.5 356.2 671.2 354.0 648.0 351.8 640.0 347.8 633.5 342.2 628.0 327.8 617.5 307.0 605.5Z" fill="#1ed7e0" fill-rule="evenodd"/><path d="M280.5 594.2 268.5 590.8 259.2 589.2 246.0 589.0 236.5 590.0 220.2 593.2 203.0 598.2 191.0 603.0 177.0 610.0 164.5 617.5 148.8 628.8 134.5 641.0 124.0 651.5 104.5 675.5 97.5 687.0 92.5 698.2 90.0 707.2 90.5 736.2 96.0 762.5 104.5 783.2 116.8 802.5 137.5 827.5 155.0 845.8 175.2 860.8 185.2 871.8 284.5 871.5 316.5 854.8 335.5 841.8 359.5 820.2 375.8 801.0 375.8 701.5 371.5 688.8 368.2 682.2 365.2 679.2 358.0 676.8 355.5 673.8 354.2 666.5 353.5 649.8 351.2 641.0 347.8 635.0 342.0 629.0 327.8 618.5 306.8 606.2Z" fill="#20d9bf" fill-rule="evenodd"/><path d="M274.2 593.0 256.5 589.8 242.5 590.0 227.8 592.2 211.2 596.2 197.0 601.0 172.5 613.0 158.5 622.0 146.2 631.2 133.0 643.0 120.5 656.0 110.0 668.8 101.8 680.8 96.5 690.2 92.0 701.8 90.0 711.5 90.0 725.2 93.0 747.0 99.2 770.0 106.2 785.2 120.2 806.2 141.8 831.2 158.2 847.8 178.0 861.5 187.0 871.8 281.0 871.8 311.0 856.8 333.5 842.0 347.0 830.8 361.0 817.0 375.8 798.8 375.8 704.5 371.2 690.8 367.8 683.8 363.2 680.2 356.5 678.5 354.5 675.8 353.5 670.2 353.0 651.8 350.8 642.0 347.8 636.5 342.0 630.2 325.8 618.2 293.0 600.2Z" fill="#22db9e" fill-rule="evenodd"/><path d="M275.8 594.2 256.2 590.5 245.8 590.5 230.2 592.5 211.8 596.8 197.8 601.2 185.5 606.5 172.0 613.8 159.5 621.8 146.2 631.8 136.2 640.5 122.2 654.8 112.0 667.0 103.5 679.0 96.0 692.8 92.8 701.5 90.8 711.0 90.5 721.5 93.8 746.8 100.0 770.0 107.5 786.2 122.5 808.2 143.8 832.5 160.2 848.5 180.0 861.5 189.2 871.8 278.0 871.8 310.2 856.0 331.8 842.0 344.8 831.2 357.2 819.2 367.2 808.0 375.8 796.5 375.8 707.5 370.8 692.2 366.8 684.8 363.5 682.2 356.0 681.0 353.8 678.5 352.5 671.0 352.2 652.0 350.0 642.5 346.8 636.8 340.0 629.8 324.5 618.5 292.8 601.0ZM203.0 764.8 204.0 764.0 206.8 764.5 209.0 767.2 208.8 769.0 206.5 769.8 204.5 768.8 203.0 767.0Z" fill="#24dd7d" fill-rule="evenodd"/><path d="M274.8 594.8 255.5 591.2 242.8 591.5 230.2 593.2 199.2 601.2 186.0 606.8 171.5 614.5 155.2 625.2 143.0 635.0 121.8 656.0 112.2 667.5 102.8 681.2 97.0 692.0 93.5 701.2 91.5 710.8 91.2 720.5 94.2 745.0 100.8 770.0 108.8 787.2 125.0 810.5 148.2 836.2 162.8 849.5 182.2 861.5 191.5 871.8 275.8 871.2 309.5 855.2 332.2 840.2 344.8 829.8 357.2 817.5 367.2 806.0 375.8 794.0 375.8 710.5 370.5 694.5 366.8 687.0 363.5 684.2 355.5 683.5 352.8 681.0 351.8 676.8 351.5 652.2 350.0 645.0 348.0 640.5 344.0 635.0 338.8 630.0 321.2 617.5 292.5 601.8ZM199.5 760.2 204.5 759.5 209.2 761.8 213.5 767.0 213.5 772.0 211.8 773.8 207.8 774.2 201.5 771.0 199.0 768.0 197.8 764.5 198.0 762.2Z" fill="#26df5c" fill-rule="evenodd"/><path d="M272.8 595.0 254.5 592.0 243.2 592.2 229.0 594.2 199.5 601.8 186.5 607.0 171.0 615.2 147.5 631.8 137.8 640.2 123.5 654.8 112.5 668.0 104.5 679.5 98.2 690.8 94.2 701.0 92.2 710.8 92.0 719.0 95.0 744.5 101.2 769.2 109.8 787.8 125.5 810.2 153.5 840.5 164.0 849.5 185.5 862.0 194.0 871.8 270.8 871.8 311.0 853.2 333.0 838.2 356.5 816.5 366.8 804.5 375.8 791.5 375.8 713.8 370.2 696.8 366.2 688.8 362.0 685.8 354.0 685.8 351.5 683.0 350.8 679.5 350.8 652.8 349.8 647.2 347.0 640.8 337.5 630.2 319.5 617.5 293.8 603.2ZM195.8 759.2 198.5 757.0 202.5 756.5 207.0 757.8 211.0 760.2 216.5 767.5 217.0 772.2 216.0 774.5 213.0 776.8 208.5 777.0 201.0 773.5 195.5 766.5 194.8 761.8Z" fill="#28e13b" fill-rule="evenodd"/><path d="M271.5 595.5 259.8 593.2 244.2 593.0 221.8 596.5 194.2 604.2 178.0 611.8 168.5 617.2 144.2 635.0 123.0 656.0 105.0 679.8 98.2 692.2 94.8 701.8 93.0 711.0 93.0 721.2 97.5 753.0 103.2 772.5 113.0 792.0 130.0 814.8 153.5 839.5 167.2 850.8 188.5 862.0 197.0 871.8 266.2 871.8 300.8 857.2 322.5 844.8 341.2 829.8 362.2 808.0 375.8 788.5 375.8 717.2 369.8 698.5 365.8 690.5 361.8 687.8 352.5 688.2 350.2 685.5 349.5 679.8 350.2 656.0 349.0 648.0 346.2 641.5 342.8 636.8 335.2 629.8 316.5 616.8 290.8 602.8ZM193.5 757.5 197.0 754.8 202.2 754.2 206.8 755.5 211.5 758.2 215.5 762.0 218.8 767.2 219.5 773.5 218.5 776.0 215.8 778.5 211.5 779.5 205.5 778.2 201.2 776.0 196.5 771.8 193.0 766.0 192.2 760.8Z" fill="#2ee135" fill-rule="evenodd"/><path d="M272.0 596.5 255.2 593.8 242.5 594.0 228.2 596.0 196.5 604.0 185.5 608.5 171.8 615.8 148.5 632.0 139.0 640.2 124.8 654.8 114.0 667.8 105.5 680.0 99.5 691.0 95.8 700.8 94.0 709.0 93.8 719.0 97.2 747.2 103.5 771.0 113.8 792.0 130.8 814.8 157.0 841.8 170.0 851.5 191.8 861.8 200.8 871.8 261.2 871.8 303.0 855.0 321.2 844.2 343.0 826.5 363.5 804.2 375.8 785.2 375.8 720.8 369.0 699.8 364.5 691.5 361.2 689.8 352.0 691.2 349.2 689.0 348.5 685.8 349.2 654.0 348.2 648.8 345.5 642.2 336.2 632.0 317.5 618.5 294.5 605.5ZM191.8 755.5 196.2 752.5 202.0 752.2 208.2 754.2 213.0 757.2 217.8 762.0 220.8 767.0 221.8 774.8 220.2 778.0 216.0 781.0 210.8 781.5 205.0 780.0 199.8 777.0 194.5 772.0 190.8 765.5 190.0 759.8Z" fill="#34e12f" fill-rule="evenodd"/><path d="M268.5 596.5 257.0 594.8 244.5 594.8 221.2 598.2 194.0 605.5 185.0 609.2 169.2 617.8 156.2 626.5 143.5 636.8 122.8 657.8 112.2 671.0 104.2 683.2 99.5 692.5 96.0 702.5 94.8 709.5 94.8 720.0 99.0 751.5 105.8 774.8 115.2 793.2 131.8 815.0 158.8 842.2 171.2 851.2 196.2 861.8 205.2 871.8 255.0 871.8 293.8 857.8 308.0 851.2 320.8 843.2 331.5 835.0 350.8 817.0 366.0 798.5 375.8 781.8 375.8 724.5 368.5 701.8 364.2 693.8 362.2 692.2 359.0 691.8 350.0 694.2 347.8 692.0 347.2 681.8 348.8 659.0 347.2 648.8 344.5 642.8 334.2 631.8 314.0 617.5 287.8 603.2ZM190.5 753.2 194.5 750.8 201.2 750.2 207.2 752.0 215.8 757.5 220.8 763.2 223.8 770.0 224.0 775.0 221.8 780.0 217.8 782.8 212.0 783.5 205.0 781.8 197.2 777.0 192.2 771.8 188.5 764.5 188.0 758.2Z" fill="#3be228" fill-rule="evenodd"/><path d="M267.8 597.2 257.8 595.8 243.5 595.8 216.0 600.2 191.0 607.2 168.0 619.0 144.8 636.2 122.8 658.5 114.0 669.5 105.5 682.2 100.0 693.0 96.5 703.8 95.5 710.8 95.8 720.0 98.5 743.2 101.0 756.2 108.5 779.2 119.5 798.5 138.0 821.0 163.0 844.8 176.8 853.0 203.0 862.0 205.5 864.0 207.2 868.5 211.5 871.8 246.8 871.8 266.2 864.5 293.8 856.5 308.0 850.0 326.5 837.5 347.8 818.2 364.8 797.8 370.5 788.8 375.8 778.0 375.8 728.8 367.8 703.2 364.5 696.8 360.8 694.0 357.2 694.2 349.2 697.8 347.5 697.5 346.2 695.8 345.8 687.8 347.8 667.5 347.8 656.8 346.8 650.8 343.8 643.8 341.0 640.0 331.5 631.0 312.5 617.8 286.8 603.8ZM188.5 752.0 193.0 749.0 199.5 748.2 207.2 750.2 215.5 755.2 221.5 761.5 225.5 769.2 226.0 776.5 223.8 781.2 218.5 784.8 211.2 785.2 205.0 783.5 197.0 778.8 190.5 772.0 186.2 763.2 186.0 757.2ZM233.5 668.0 235.2 667.2 238.2 667.8 242.2 671.2 244.0 675.2 243.8 678.5 242.2 680.2 238.2 680.2 234.0 676.8 232.2 673.0 232.2 670.0Z" fill="#41e222" fill-rule="evenodd"/><path d="M260.8 597.0 248.0 596.5 236.2 597.5 200.5 604.8 182.0 611.8 162.2 623.2 149.2 633.0 138.5 642.5 117.5 665.8 104.5 685.2 99.0 697.5 96.8 707.0 96.5 716.8 98.8 737.8 103.8 763.2 107.5 774.8 113.2 787.2 124.2 804.0 141.5 823.8 165.8 845.8 174.0 850.8 182.5 854.2 215.0 862.2 217.2 864.0 216.8 868.5 219.8 870.5 223.0 871.2 236.8 870.8 254.0 864.2 285.0 858.0 300.5 852.5 311.8 846.5 332.5 831.0 352.8 810.8 366.8 792.0 372.5 781.5 375.8 773.2 375.8 733.5 365.8 702.0 364.0 699.0 360.2 696.2 355.8 697.0 347.0 702.0 345.5 702.0 344.2 700.2 344.0 693.8 346.8 669.8 347.0 658.8 346.0 652.0 343.2 645.2 340.0 640.8 330.5 631.8 304.8 614.2 280.2 602.0 272.0 599.2ZM186.0 751.5 191.0 747.5 200.0 746.5 209.5 749.5 216.8 754.2 223.0 760.8 227.5 769.5 228.2 776.0 225.8 782.5 221.2 786.0 213.2 787.2 204.5 785.0 196.5 780.2 189.5 773.2 185.0 765.2 184.0 756.2ZM229.2 663.0 232.8 661.8 237.0 662.5 240.5 664.5 244.5 668.5 248.0 677.0 247.5 681.2 245.2 684.2 243.0 685.2 238.2 684.8 234.0 682.2 230.8 679.0 226.8 670.8 226.8 667.0Z" fill="#48e31b" fill-rule="evenodd"/><path d="M273.8 600.8 264.2 598.5 253.5 597.5 233.0 599.0 197.0 606.5 187.8 609.8 175.8 615.5 154.0 629.8 140.8 641.0 130.8 651.0 113.0 672.8 105.8 684.2 100.8 694.8 97.5 708.2 97.5 716.0 100.5 742.8 106.8 770.0 114.8 788.5 129.0 809.0 147.5 828.8 166.2 845.0 174.0 849.8 181.8 853.0 191.5 855.8 208.5 858.5 254.8 860.5 277.2 858.2 289.0 855.5 298.8 852.0 310.8 845.8 324.2 836.2 345.8 816.5 361.2 797.5 367.8 787.2 373.0 776.2 375.8 767.2 375.8 739.5 365.2 704.5 361.8 699.5 358.8 698.5 354.0 700.2 343.2 708.5 341.2 706.5 346.0 668.5 345.8 656.0 342.5 646.5 338.2 640.8 331.2 634.0 314.0 621.2 294.8 609.8ZM184.2 750.0 187.8 746.8 191.0 745.2 198.5 744.5 208.5 747.2 216.8 752.2 224.5 760.0 229.2 768.8 230.2 777.5 227.8 783.8 222.0 788.0 212.8 789.0 204.5 786.8 195.0 781.0 188.5 774.5 183.2 765.5 182.0 761.0 182.0 755.2ZM225.0 658.8 228.8 657.2 234.5 657.8 239.8 660.2 245.5 665.5 249.5 672.2 250.8 677.0 250.5 682.5 247.5 687.2 244.2 688.8 237.8 688.0 232.8 685.2 227.2 680.0 222.8 672.5 221.5 667.5 222.2 662.0Z" fill="#4ee315" fill-rule="evenodd"/><path d="M278.2 603.2 260.2 599.0 237.5 599.5 197.0 607.2 176.8 615.5 153.8 630.5 134.2 648.0 123.2 660.2 113.5 673.0 106.8 683.8 102.0 693.5 98.5 707.5 100.8 735.8 105.8 763.0 113.2 784.0 123.8 801.2 138.2 818.5 161.2 840.0 170.5 846.8 177.2 850.2 185.8 853.2 201.0 856.2 242.8 858.0 273.2 857.2 285.0 855.2 296.2 851.8 314.8 841.8 336.5 824.0 348.0 812.0 358.0 799.5 365.5 788.0 370.8 777.5 375.2 761.5 375.5 747.2 372.8 733.2 363.8 705.2 360.8 701.8 356.2 701.5 350.0 706.0 341.8 715.2 339.8 716.0 338.2 714.0 338.5 707.0 342.5 688.5 345.0 670.2 344.8 656.5 342.2 648.8 337.5 642.0 331.5 636.0 318.5 625.8 297.2 612.2ZM182.5 748.5 188.2 744.0 196.8 742.5 207.5 745.0 217.8 751.0 226.2 759.5 231.0 768.0 232.5 777.5 230.0 784.8 223.8 789.8 214.0 791.0 204.5 788.5 194.8 782.8 187.2 775.5 181.2 765.2 179.8 756.0ZM219.8 654.2 224.5 652.5 232.5 653.2 240.8 657.5 246.8 663.2 251.2 670.5 253.2 677.2 253.0 684.2 249.8 689.8 245.0 692.0 240.8 692.0 236.5 690.8 229.8 686.8 223.0 680.2 218.0 672.8 215.5 665.0 216.2 658.5Z" fill="#5ee514" fill-rule="evenodd"/><path d="M276.8 603.8 259.0 600.0 250.0 599.8 235.0 601.0 197.2 608.0 184.8 612.2 175.0 617.0 153.5 631.2 132.8 650.2 113.5 674.0 106.5 685.5 102.5 694.2 99.8 704.8 99.5 712.5 102.8 742.0 107.8 766.2 114.5 784.8 124.8 801.5 137.2 816.5 151.2 830.2 164.2 841.2 172.0 846.5 179.8 850.2 189.8 853.2 202.8 855.2 242.5 856.2 275.2 855.5 284.5 854.0 296.8 850.2 306.5 845.5 316.2 839.2 327.8 830.2 339.2 819.5 350.0 807.5 359.5 794.8 365.5 784.8 370.0 775.0 373.5 762.2 374.0 747.8 371.0 732.8 366.2 716.2 362.5 707.0 359.2 704.0 355.8 704.2 349.0 710.0 339.2 722.2 336.8 722.8 335.2 720.5 335.8 711.2 341.0 690.5 344.0 671.2 343.8 657.5 340.5 648.5 330.5 637.0 314.2 624.2 294.8 612.0ZM180.5 747.2 186.8 742.2 196.5 740.5 208.5 743.5 219.2 750.0 229.2 760.5 233.8 769.8 234.8 778.5 234.0 782.2 231.2 787.2 225.0 791.8 219.8 793.0 214.8 793.0 204.2 790.2 192.8 783.2 184.8 775.0 179.2 765.2 177.8 759.5 177.8 754.0ZM212.8 649.5 219.0 647.0 229.2 648.0 237.5 651.8 246.5 659.2 253.2 669.5 255.8 678.0 255.2 686.5 251.2 692.8 245.2 695.2 236.5 694.0 227.0 688.8 217.5 680.0 211.8 671.8 208.5 662.5 208.8 655.5Z" fill="#71e814" fill-rule="evenodd"/><path d="M277.2 605.0 260.0 601.2 237.5 602.0 196.8 609.0 187.0 612.0 176.5 616.8 167.0 622.2 153.2 632.0 132.2 651.5 115.8 671.8 108.8 682.8 103.5 693.8 101.0 703.0 100.8 712.8 103.8 739.8 109.2 767.5 114.8 783.2 123.2 798.2 136.8 815.0 148.2 826.5 163.5 839.5 171.8 845.2 180.5 849.5 189.8 852.2 201.2 854.0 243.2 854.8 275.2 854.0 283.8 852.8 294.5 849.8 305.8 844.5 319.0 835.8 331.2 825.5 341.5 815.2 350.2 805.0 359.0 792.8 368.2 775.0 372.2 759.5 372.2 746.8 366.0 721.2 361.0 708.8 357.8 706.8 353.0 708.8 348.2 714.0 341.8 724.0 337.0 728.8 334.0 729.2 332.2 726.0 332.8 716.8 340.8 686.8 343.0 671.8 342.8 658.8 339.8 650.2 335.2 644.0 328.0 636.8 313.5 625.2 294.0 612.8ZM178.8 745.5 182.5 742.0 187.5 739.5 197.8 738.5 209.8 742.0 220.0 748.2 231.0 759.5 236.2 770.2 237.0 780.8 235.8 785.0 233.2 789.0 226.0 794.0 217.0 795.2 206.2 793.0 193.5 786.0 183.5 776.2 176.8 764.2 175.5 759.0 175.5 753.0ZM206.8 643.5 214.2 640.5 224.2 641.5 236.0 646.8 247.5 656.5 255.5 669.0 258.2 678.8 257.8 688.0 256.2 691.8 252.5 696.0 246.2 698.5 241.2 698.5 234.5 696.8 221.2 689.2 211.5 680.2 204.5 669.2 201.5 659.5 202.0 650.5Z" fill="#84ea14" fill-rule="evenodd"/><path d="M279.0 606.8 262.8 602.8 244.2 602.8 195.5 610.2 179.8 615.8 158.2 628.8 146.8 638.0 135.8 648.5 118.2 669.2 109.8 682.2 105.5 690.8 103.2 697.0 101.8 705.5 105.0 738.2 110.0 765.5 116.5 785.0 125.5 800.2 141.5 819.0 162.8 837.8 171.2 843.8 179.5 848.0 190.0 851.2 202.0 853.0 262.8 853.2 281.0 851.8 296.0 847.8 306.2 842.8 316.2 836.2 327.5 827.2 340.0 815.0 354.2 797.2 365.5 777.5 370.2 761.8 370.8 749.0 367.2 732.2 360.5 712.5 357.8 710.2 355.0 710.5 352.8 712.0 347.8 718.0 339.8 730.5 335.0 735.0 332.0 735.8 329.5 732.2 329.2 725.8 330.5 718.0 339.2 688.5 341.8 674.5 341.8 660.8 338.5 651.2 333.2 644.2 326.2 637.2 311.0 625.0 292.8 613.2ZM177.8 742.8 182.8 739.0 187.8 737.0 198.0 736.2 209.2 739.5 223.0 748.0 232.8 758.0 238.8 769.8 239.8 781.2 238.2 786.5 236.0 790.2 232.8 793.5 228.2 796.0 222.0 797.5 216.5 797.5 204.0 794.2 190.5 786.0 179.2 773.8 173.8 762.0 173.2 751.0 175.2 746.0ZM133.5 712.0 135.2 715.8 135.2 724.0 133.0 731.2 131.0 732.5 129.0 728.8 129.0 720.2 131.0 713.5ZM201.8 638.0 209.5 634.0 216.5 633.8 221.2 634.8 230.2 638.5 237.0 642.8 248.0 652.8 256.2 664.8 260.8 678.0 260.2 690.2 258.5 694.5 255.5 698.2 251.2 701.0 246.0 702.2 235.5 701.0 219.8 693.8 208.5 684.2 203.5 677.5 198.8 668.5 195.2 657.5 195.8 647.2 198.2 642.0Z" fill="#97ed14" fill-rule="evenodd"/><path d="M279.2 608.0 264.5 604.2 245.5 604.2 212.2 609.8 195.5 611.2 179.0 616.8 166.0 624.0 154.8 632.0 134.8 650.2 117.5 671.2 106.8 689.8 103.5 700.0 103.2 710.8 105.2 721.5 108.5 751.2 113.2 773.0 117.8 785.5 127.2 801.5 143.5 820.0 165.0 838.2 181.0 847.5 190.2 850.2 203.5 852.0 259.8 851.8 280.5 850.2 295.2 846.5 306.2 841.2 317.2 834.0 328.8 824.5 338.8 814.5 352.8 797.0 364.0 777.0 368.5 762.0 369.0 750.0 367.8 742.0 361.2 719.8 358.8 715.2 355.5 714.0 350.8 717.5 341.2 732.5 333.8 740.8 329.5 742.2 327.5 740.8 326.5 738.2 326.2 729.5 327.5 722.0 338.0 688.8 340.5 676.2 340.8 663.2 337.8 653.5 329.5 642.8 313.8 628.8 297.0 617.0ZM174.5 742.2 183.2 736.0 189.5 734.0 196.2 733.5 208.5 736.5 224.2 746.0 235.8 757.5 241.8 769.5 243.0 776.0 242.8 782.5 241.5 787.2 238.2 792.8 230.2 798.5 219.0 800.2 212.0 799.2 204.2 796.8 191.0 789.0 179.5 777.8 172.0 764.8 170.2 758.0 170.2 751.2 171.2 747.5ZM134.5 704.5 136.8 707.2 137.8 711.5 137.8 724.5 135.0 736.2 132.5 740.2 130.0 741.0 127.8 738.2 126.5 733.5 126.5 719.8 129.8 708.2 132.8 704.8ZM203.0 630.0 211.0 627.0 216.8 627.2 224.8 629.8 231.8 633.5 239.2 639.0 252.5 653.2 260.2 666.8 264.0 680.5 263.2 692.5 260.8 698.2 256.8 702.8 252.8 705.0 247.5 706.2 240.0 706.2 231.2 704.5 223.2 701.5 214.0 696.2 207.2 690.2 203.5 685.5 193.2 667.0 189.2 654.8 189.5 649.2 192.5 641.5 197.2 635.0Z" fill="#aaef14" fill-rule="evenodd"/><path d="M280.0 609.5 267.2 606.0 252.0 605.5 232.5 608.0 214.2 612.0 193.2 612.8 177.8 618.0 165.8 624.8 155.5 632.0 134.5 651.2 117.0 673.0 107.5 690.0 104.5 700.2 104.5 708.5 107.2 722.2 108.2 736.8 110.8 753.8 115.0 774.5 119.2 786.5 129.2 803.0 143.8 819.2 164.2 836.5 180.2 846.0 194.8 850.0 212.5 851.0 273.5 849.2 286.2 847.5 296.2 844.5 305.2 840.2 315.5 833.8 334.5 817.2 350.8 797.5 357.5 786.8 362.5 776.5 366.5 763.2 367.0 749.5 359.8 723.5 357.0 719.2 354.2 718.8 350.8 721.5 340.2 738.0 332.2 746.8 328.8 748.8 326.0 748.8 324.2 747.2 323.0 744.0 322.8 734.8 324.2 725.5 335.2 693.8 338.5 681.8 339.8 669.0 337.5 657.2 329.5 645.5 312.8 629.8 296.5 618.0ZM170.5 742.2 175.5 737.5 182.0 733.8 189.2 731.2 197.8 730.5 209.2 733.5 228.2 745.5 233.2 749.5 239.5 756.5 243.5 763.2 245.5 768.8 246.8 775.8 246.5 783.2 245.2 788.2 242.2 794.0 237.5 798.8 232.5 801.5 225.0 803.2 218.5 803.2 204.2 799.5 190.8 791.8 177.5 779.2 169.8 766.8 167.5 760.0 166.8 752.8 167.8 747.2ZM135.5 699.5 137.8 701.2 139.5 706.2 139.8 725.8 136.0 741.8 133.8 745.8 130.0 748.2 127.0 746.0 125.0 740.8 124.0 733.8 124.2 720.8 126.2 710.8 129.0 704.5 132.8 700.2ZM205.5 623.0 211.0 620.8 217.5 620.5 222.2 621.8 230.0 625.5 237.8 631.0 246.5 639.5 256.8 653.2 264.2 668.0 267.0 677.2 268.0 686.2 266.0 698.5 263.2 703.8 259.0 707.8 254.8 709.5 246.8 710.5 235.2 710.5 225.8 709.0 212.8 702.8 206.8 697.5 202.5 692.0 186.5 663.0 184.5 657.8 184.2 652.5 186.2 645.8 192.0 636.0 199.5 627.5Z" fill="#bbf111" fill-rule="evenodd"/><path d="M280.0 610.8 269.5 607.8 258.2 607.0 238.5 609.8 230.5 612.0 226.8 614.2 227.0 615.5 233.8 619.5 240.5 625.0 249.0 634.5 260.8 652.5 269.2 670.2 272.8 683.8 273.0 696.2 270.5 707.8 268.2 711.5 265.2 713.5 240.8 713.8 226.5 715.5 219.8 715.2 211.0 711.0 202.8 701.8 191.5 678.5 181.5 663.5 179.5 657.8 181.2 649.5 186.2 640.0 195.2 627.8 205.5 617.5 205.0 615.8 199.5 614.0 188.8 614.8 178.8 618.2 164.8 626.0 151.2 636.0 134.5 652.0 124.5 663.8 114.5 678.0 108.2 690.2 105.8 699.5 105.8 706.0 109.2 720.2 111.2 743.2 115.8 770.8 118.0 780.2 121.0 788.0 129.2 801.8 143.0 817.5 163.5 834.8 173.0 841.0 181.5 845.2 189.2 847.8 198.0 849.2 216.0 849.5 275.5 847.0 287.8 845.2 296.2 842.8 305.5 838.5 314.0 833.2 325.8 824.0 334.8 815.2 349.5 797.0 360.5 777.2 364.5 764.5 365.2 753.0 361.5 737.5 358.8 730.0 355.5 725.0 353.2 724.8 349.5 728.0 338.8 744.2 329.2 753.8 325.5 755.8 322.8 756.0 320.0 754.0 318.8 751.0 318.2 740.8 320.5 727.5 324.5 715.8 332.2 698.2 337.5 680.2 338.2 668.2 336.0 658.8 327.8 646.5 312.0 631.0 295.5 618.8ZM166.5 741.2 173.2 735.5 184.5 729.8 194.2 726.8 202.8 726.5 211.0 729.2 225.5 740.2 239.8 748.2 247.2 756.2 249.2 760.2 251.5 769.0 251.5 783.8 249.8 790.5 246.2 797.0 242.2 801.2 235.5 805.2 229.0 807.0 220.5 807.2 211.2 805.5 205.0 803.2 191.2 795.5 175.8 781.8 169.5 773.5 165.8 766.5 163.0 757.5 162.8 750.2 163.8 746.0ZM137.0 695.5 140.0 698.0 141.8 704.5 142.2 721.2 141.5 730.5 140.0 738.8 137.0 747.8 133.8 753.0 129.5 755.2 127.2 754.2 125.0 751.5 122.8 745.0 121.5 733.5 122.0 721.0 123.8 712.0 127.2 703.5 132.2 697.2Z" fill="#ccf20f" fill-rule="evenodd"/><path d="M221.0 723.8 219.5 727.8 222.0 733.2 228.0 738.2 239.2 742.0 247.8 741.2 255.2 737.8 261.0 732.5 263.5 727.2 263.2 723.5 260.2 719.8 254.8 717.2 249.5 716.2 240.8 716.2 233.8 717.5 227.8 719.5ZM161.2 629.0 142.2 644.8 126.0 662.8 113.0 682.0 109.0 690.8 107.2 697.5 107.2 704.8 112.8 722.2 114.2 738.8 116.8 752.2 117.8 770.8 119.2 779.8 124.8 793.2 134.5 807.2 151.5 824.2 169.0 837.2 185.0 845.2 198.2 848.0 209.8 848.2 230.5 846.2 260.8 845.2 288.0 843.0 297.2 840.5 307.0 836.0 321.2 826.2 335.0 813.2 344.0 802.5 353.0 789.0 359.8 775.0 362.8 764.0 363.0 753.2 359.2 740.8 356.8 735.8 353.8 732.5 352.0 732.5 348.8 735.0 338.8 748.5 329.8 757.8 324.0 762.0 319.0 764.0 316.0 763.8 313.0 761.0 308.5 742.5 307.5 741.2 306.2 741.5 290.5 757.0 283.5 761.5 268.8 768.5 264.5 772.2 262.0 776.8 257.2 792.5 253.2 800.2 246.2 807.5 236.0 812.2 230.0 813.2 221.5 813.0 214.5 811.5 205.5 808.0 186.2 795.8 176.2 787.2 167.5 778.0 161.8 769.8 157.8 760.5 156.5 749.0 158.2 743.2 162.5 738.2 165.8 736.0 196.2 720.2 198.5 718.0 199.8 714.5 197.5 702.0 191.8 685.5 186.5 676.2 176.5 665.0 175.0 661.5 176.2 654.2 180.5 645.5 190.2 630.5 198.2 620.8 199.0 617.8 196.8 616.0 194.0 615.5 185.0 616.8 173.0 621.8ZM138.8 692.0 142.5 694.8 144.0 700.2 144.8 713.5 144.0 736.2 142.0 746.0 137.8 756.2 134.0 760.5 129.2 762.0 126.0 760.8 123.5 758.2 119.8 750.5 118.2 735.8 119.0 722.5 122.0 710.2 126.5 701.2 132.0 694.8 135.0 692.8ZM244.2 612.8 242.5 614.2 242.2 615.8 252.0 629.5 267.2 656.8 276.8 676.5 286.8 704.0 290.0 708.5 302.5 720.8 309.0 731.0 310.2 730.8 326.8 705.8 333.5 690.0 336.0 680.5 336.8 671.5 335.5 663.5 332.8 657.2 325.2 646.8 312.0 633.0 300.0 623.2 289.0 616.2 278.5 611.5 267.8 609.0 256.5 609.2Z" fill="#ddf40c" fill-rule="evenodd"/><path d="M121.8 767.2 120.5 771.0 120.5 777.2 121.8 783.5 126.5 794.5 131.0 801.5 146.5 818.8 157.5 828.0 169.5 836.2 185.5 844.0 192.2 845.8 202.0 846.8 211.5 846.2 222.2 844.2 232.2 841.0 237.8 837.2 237.8 835.5 235.5 833.2 210.0 817.2 186.2 800.0 146.8 766.2 142.2 765.2 132.8 767.8 128.0 767.5 124.8 766.2ZM354.5 742.0 352.0 740.8 348.5 742.0 325.5 765.2 317.2 771.2 301.5 780.0 288.8 791.5 280.2 802.0 259.8 833.0 259.0 835.8 260.5 838.0 282.8 840.5 296.2 838.8 303.0 836.2 313.8 830.2 323.2 823.0 331.8 815.0 341.5 803.8 348.8 793.5 355.5 781.2 358.8 773.0 360.8 764.5 360.8 755.0 358.8 748.2ZM258.0 723.8 256.0 721.2 251.5 719.0 239.5 718.5 233.8 720.0 228.2 723.0 225.2 726.8 225.0 730.2 227.0 733.8 231.8 737.0 237.0 738.5 244.5 738.2 251.8 735.5 256.5 731.5 258.5 727.2ZM193.8 618.0 191.8 617.2 184.0 618.0 176.0 621.0 166.0 626.5 149.2 639.0 131.2 657.2 118.2 674.5 109.8 691.5 108.5 697.5 108.8 702.8 111.0 708.2 114.2 712.2 116.2 713.0 118.5 711.2 125.5 699.8 132.2 692.2 136.8 689.5 142.5 688.8 145.2 690.2 147.0 694.2 148.5 722.2 150.0 728.2 152.5 731.5 158.5 732.5 171.0 729.8 182.8 724.2 190.0 718.5 192.8 714.0 193.8 709.5 193.2 700.0 190.2 689.0 184.2 678.2 179.5 673.5 170.8 667.2 170.0 663.2 171.8 657.8 178.0 646.0 194.0 622.2 194.8 619.2ZM253.5 613.8 251.8 617.0 261.0 638.0 274.0 662.8 287.8 685.2 297.0 696.0 308.2 704.8 316.0 708.2 321.2 706.8 326.0 701.8 330.0 694.5 333.0 685.8 334.8 676.8 334.8 670.8 333.0 663.5 325.2 650.2 309.5 632.8 299.2 624.2 289.2 617.8 279.5 613.2 270.5 611.0 261.2 611.0Z" fill="#eef50a" fill-rule="evenodd"/><path d="M124.2 773.0 122.8 777.8 123.2 783.2 125.8 790.8 129.5 797.8 141.0 812.2 158.0 827.2 174.5 837.8 190.2 843.8 204.2 844.8 212.2 843.0 215.2 841.0 215.8 837.2 214.0 832.8 204.5 820.2 191.2 808.0 166.0 788.0 153.0 779.2 143.2 774.2 125.8 772.0ZM354.2 749.2 350.0 747.8 344.8 750.5 303.8 789.0 295.2 800.5 287.0 815.5 281.5 830.8 283.0 834.8 288.2 836.8 294.0 836.8 300.5 835.2 308.0 832.0 322.2 822.2 336.8 807.8 349.5 789.8 357.0 773.0 358.8 760.0 357.2 753.5ZM254.5 724.5 249.5 720.8 245.8 720.0 239.0 720.5 232.0 723.5 229.2 726.5 228.8 730.0 230.8 733.2 234.2 735.2 239.0 736.2 244.5 735.8 250.0 733.5 253.2 730.8 254.8 728.0ZM190.2 619.5 185.0 619.0 181.5 619.8 166.2 627.0 149.8 639.2 135.5 653.2 120.5 672.2 112.5 686.8 110.5 693.0 110.0 698.2 111.0 702.5 113.5 705.8 117.0 706.5 118.8 705.5 128.0 694.2 136.2 687.5 143.8 684.8 151.5 683.2 153.0 684.2 153.2 686.5 151.2 699.8 151.2 709.5 152.5 716.5 155.5 722.5 158.2 725.0 161.8 726.5 169.0 726.8 178.2 723.5 185.0 718.5 189.0 712.2 190.2 706.8 190.0 698.2 187.2 688.5 184.2 683.0 179.2 677.8 173.0 674.8 164.0 674.0 162.8 672.8 162.8 670.8 170.0 656.0 191.2 622.0ZM260.0 614.8 258.0 617.2 258.0 619.0 264.8 638.8 274.2 657.5 286.8 676.8 297.5 688.8 308.5 697.0 317.8 700.8 323.5 699.0 326.5 695.8 329.5 690.0 331.8 682.0 332.5 672.5 329.2 661.5 319.8 646.5 304.0 629.8 288.0 618.5 280.2 615.0 272.5 613.0 264.8 613.0Z" fill="#f1f211" fill-rule="evenodd"/><path d="M126.0 777.8 125.2 779.8 125.5 785.8 127.2 791.2 131.2 798.8 140.0 810.0 155.2 824.0 172.0 835.0 186.2 841.0 194.0 842.5 200.2 842.5 204.5 841.5 207.0 839.8 207.5 835.2 206.8 832.8 200.5 822.2 188.8 809.8 173.8 797.2 159.0 787.0 143.8 779.0 129.8 776.0 127.8 776.2ZM352.8 754.5 348.0 753.5 342.8 756.2 323.5 773.5 307.2 790.5 297.2 805.2 292.0 816.0 288.5 827.5 289.0 830.5 290.2 832.0 294.5 833.5 299.0 833.2 309.8 829.2 323.0 820.0 336.5 806.2 349.0 788.0 355.0 773.8 356.2 767.5 356.2 761.5 355.5 758.5ZM251.5 725.8 249.8 723.5 247.0 722.2 239.8 722.2 233.5 725.5 232.2 727.5 232.2 730.0 234.0 732.2 236.5 733.5 243.5 733.8 248.8 731.5 251.5 728.0ZM172.5 679.0 166.8 680.0 161.8 683.8 157.8 690.2 155.2 699.8 155.2 708.8 157.0 715.2 160.5 720.2 166.2 723.0 173.0 722.5 179.5 719.2 184.8 713.5 187.2 706.2 187.0 696.2 183.8 687.2 178.5 681.2ZM187.0 621.0 182.5 620.8 177.8 622.0 165.0 628.5 150.0 639.8 136.0 653.5 123.0 669.8 115.0 683.2 111.8 693.5 112.0 698.2 114.2 701.8 117.5 702.2 119.5 701.2 133.0 687.8 146.5 680.5 156.2 672.2 165.2 660.2 188.0 623.8ZM264.5 616.5 263.0 618.2 262.8 621.2 266.8 636.5 275.2 654.5 285.8 670.8 298.2 684.5 306.2 690.5 315.8 694.8 319.8 695.0 323.0 693.8 326.0 690.5 328.5 684.8 329.5 679.2 329.2 671.2 327.5 664.8 323.5 656.2 315.0 643.5 303.0 630.8 287.5 619.8 280.8 616.8 273.2 615.0 267.5 615.2Z" fill="#f4ee19" fill-rule="evenodd"/><path d="M128.0 781.5 127.5 786.8 128.2 790.0 132.8 799.2 140.2 809.0 154.5 822.2 169.5 832.2 184.0 838.5 195.0 840.0 198.5 839.2 200.8 837.5 200.8 831.0 196.0 822.0 184.5 809.2 173.2 799.8 160.2 790.8 146.0 783.2 133.2 779.8 130.2 779.8ZM350.8 759.0 345.8 758.5 339.0 762.5 327.5 772.5 310.8 790.2 303.5 800.5 296.8 813.5 293.8 823.2 293.8 826.8 295.2 829.0 299.2 830.2 303.2 829.8 314.8 824.5 327.0 814.8 338.0 802.5 348.0 787.0 352.8 775.2 353.8 764.2 352.8 761.2ZM236.0 727.5 237.0 730.5 242.5 731.5 246.2 730.0 248.0 727.2 246.2 724.8 241.0 724.2 237.8 725.5ZM173.0 683.0 168.8 683.8 164.5 686.8 161.0 692.0 158.8 699.8 158.8 707.8 161.0 714.2 164.5 718.0 168.8 719.5 174.8 718.5 178.8 716.0 182.0 712.2 184.8 704.2 184.5 696.5 182.2 690.0 178.8 685.5ZM184.5 623.0 180.2 622.5 177.2 623.2 165.0 629.2 150.2 640.2 137.0 653.2 124.0 669.5 116.0 683.2 113.5 691.5 113.8 695.8 115.5 698.2 117.8 698.8 121.0 697.2 131.5 687.2 146.5 677.8 156.0 669.0 166.5 655.5 177.5 638.8 184.8 626.0ZM268.5 618.5 267.0 620.5 266.8 624.5 270.0 638.2 277.5 654.2 287.5 669.2 297.8 680.2 306.2 686.5 315.5 690.0 319.5 689.8 322.0 688.5 324.0 686.2 326.0 681.0 325.8 670.2 322.2 659.5 312.5 643.2 300.0 630.0 288.2 621.8 276.8 617.5 272.2 617.2Z" fill="#f7eb20" fill-rule="evenodd"/><path d="M130.5 784.2 129.8 786.2 130.2 791.0 134.5 800.0 141.2 808.8 154.8 821.2 166.2 829.0 178.2 834.8 187.0 837.0 191.5 837.0 195.0 835.2 196.0 832.2 195.5 828.8 190.8 819.8 180.8 808.8 172.5 801.8 159.0 792.5 146.0 786.0 136.2 783.2 132.8 783.0ZM348.8 763.2 344.5 762.8 337.2 766.8 325.0 777.5 313.2 790.5 304.8 803.0 300.0 813.0 297.8 822.0 299.5 826.0 305.0 826.8 315.0 822.5 326.2 813.8 336.5 802.5 345.2 789.2 350.2 777.5 351.2 767.8ZM173.2 687.0 170.0 687.5 166.0 690.5 163.2 695.2 161.8 701.8 162.2 707.8 163.8 711.5 167.0 714.8 170.2 715.8 175.8 714.2 179.0 711.2 181.2 707.0 182.2 701.8 181.8 696.5 179.8 691.5 177.0 688.5ZM181.5 624.8 179.0 624.2 174.0 625.5 163.5 631.0 150.2 641.0 138.0 653.0 126.2 667.5 119.8 677.8 115.5 688.5 115.5 692.8 117.0 695.0 119.5 695.2 122.8 693.5 131.2 685.8 147.5 674.8 155.5 667.0 163.5 657.2 175.0 640.2 181.8 628.0 182.2 626.0ZM271.8 621.0 270.5 623.5 270.2 628.2 273.2 640.8 279.2 653.5 287.8 666.2 297.8 677.0 305.8 682.8 313.5 685.5 316.2 685.5 319.8 684.0 322.8 678.2 322.2 668.2 318.5 657.2 309.5 642.2 299.8 631.8 288.8 623.8 279.0 620.0 275.0 619.8Z" fill="#f9e728" fill-rule="evenodd"/><path d="M133.0 787.2 132.5 792.2 135.8 799.8 143.0 809.2 153.5 819.0 164.8 826.8 177.0 832.5 187.2 834.0 190.2 832.2 191.0 827.2 188.0 820.5 182.8 813.8 171.0 803.0 161.0 796.0 148.5 789.5 138.2 786.5 135.2 786.2ZM346.5 767.2 341.5 767.2 334.2 771.8 320.5 784.8 315.2 791.0 308.2 801.2 303.8 810.5 301.8 817.5 302.8 822.5 305.0 823.5 308.5 823.2 316.8 819.5 326.5 811.8 335.5 801.8 343.0 790.5 347.8 779.5 348.8 771.8ZM174.0 691.8 169.8 692.5 167.2 695.2 165.5 699.8 166.0 707.0 168.0 710.0 170.8 711.2 174.8 710.2 177.5 707.2 179.0 703.0 178.2 696.0 176.8 693.5ZM178.5 626.5 172.5 627.2 163.2 632.0 151.5 640.8 139.5 652.2 130.2 663.2 122.0 675.5 117.8 685.2 117.5 690.0 118.2 691.5 120.8 692.0 123.8 690.5 133.8 682.2 144.8 675.0 153.8 666.8 165.8 652.0 173.0 641.0 179.0 629.5ZM275.2 623.5 273.5 627.8 274.8 638.5 280.5 652.0 286.5 661.5 293.2 669.8 303.0 678.0 310.5 681.2 314.5 681.2 316.8 680.2 319.5 675.5 319.0 666.0 315.5 656.0 307.5 642.5 298.0 632.2 289.8 626.2 281.2 622.8 278.0 622.5Z" fill="#f8e235" fill-rule="evenodd"/><path d="M135.5 790.5 135.0 793.8 135.8 796.5 140.2 804.2 154.2 818.2 164.2 825.0 172.5 829.0 180.2 831.0 183.5 830.8 185.8 829.2 186.5 825.2 184.0 819.2 178.2 812.0 169.0 803.8 159.0 797.0 149.5 792.2 140.8 789.8 136.5 789.8ZM344.0 771.2 339.8 771.2 332.5 775.8 316.8 792.0 310.8 801.0 307.0 808.8 305.2 815.8 306.8 819.5 311.5 819.8 318.2 816.5 325.0 811.2 334.2 801.2 340.5 792.0 345.0 782.0 346.0 775.0ZM172.5 700.0 171.5 700.8 171.8 702.8 173.2 702.0ZM175.8 628.8 173.2 628.5 169.2 629.8 159.0 635.8 149.0 643.8 139.0 653.8 130.8 663.8 123.5 674.8 119.8 683.8 119.8 687.2 120.8 688.5 124.5 687.8 142.8 674.8 154.5 664.0 170.2 643.0 176.0 631.8ZM279.0 626.2 276.5 630.8 277.0 638.0 280.5 648.0 287.2 659.5 291.8 665.2 301.8 674.2 308.2 677.2 311.0 677.5 314.0 676.5 316.5 672.0 316.0 664.2 312.5 654.5 307.5 645.8 301.2 637.8 292.8 630.2 284.2 626.0Z" fill="#f7dc43" fill-rule="evenodd"/><path d="M138.5 793.8 138.2 797.2 141.8 804.0 146.8 810.0 154.2 816.8 162.2 822.2 169.8 826.0 176.2 827.8 179.2 827.5 181.2 826.2 182.0 823.0 180.0 818.0 176.2 813.0 167.2 804.8 158.2 798.8 149.8 794.8 142.8 793.0ZM341.5 775.5 338.2 775.2 332.8 778.2 319.2 791.8 313.5 800.2 310.5 806.5 309.0 811.8 310.0 815.8 313.2 816.2 319.0 813.8 325.8 808.5 333.2 800.2 339.0 791.5 342.0 784.8 343.0 778.5ZM172.8 631.0 168.2 631.5 159.2 636.5 141.8 651.8 134.0 660.8 126.5 671.5 122.5 680.0 122.5 684.8 126.5 684.2 141.5 674.0 153.5 663.2 162.0 653.0 169.2 642.0 173.2 633.0ZM281.8 630.0 279.8 632.8 279.8 639.5 282.2 647.2 288.0 657.5 292.2 663.0 301.2 671.0 307.2 673.5 311.2 672.8 313.5 668.5 313.0 662.2 310.2 654.5 305.0 645.5 300.2 639.5 292.8 632.8 287.0 629.8Z" fill="#f5d651" fill-rule="evenodd"/><path d="M142.0 797.5 142.0 800.5 145.0 805.8 156.5 816.8 163.2 821.0 170.0 823.8 174.8 824.0 176.8 822.8 177.0 819.5 174.5 814.8 169.5 809.2 163.2 804.2 149.2 797.2 143.2 796.8ZM338.5 780.0 336.0 779.8 332.0 781.8 321.5 792.0 314.0 804.5 313.0 810.5 314.0 811.8 316.5 812.0 322.2 809.0 332.0 799.2 338.5 788.0 339.5 784.2ZM284.5 634.0 282.8 636.8 283.0 642.5 285.8 650.0 290.0 657.0 294.8 662.8 299.8 667.0 304.5 669.2 308.5 668.8 310.2 665.5 309.8 659.8 308.0 654.8 302.8 645.8 296.0 638.2 291.5 635.0 287.2 633.5ZM170.0 633.8 166.5 633.8 159.8 637.2 151.8 643.2 142.5 652.0 128.8 669.8 125.2 677.0 124.8 679.8 125.5 681.2 129.0 680.5 139.5 673.8 153.0 662.0 165.2 646.0 169.2 638.2Z" fill="#f5d35c" fill-rule="evenodd"/><path d="M146.8 802.0 146.8 803.8 149.0 807.5 156.8 814.8 166.0 819.5 169.8 819.8 171.0 819.0 171.2 816.5 169.5 813.2 162.0 806.2 152.8 801.5 148.5 801.0ZM334.5 785.5 333.2 785.2 329.8 787.0 322.5 794.5 318.2 802.0 318.2 806.5 323.0 805.2 329.8 798.8 334.5 790.8 335.2 788.0ZM287.8 638.5 286.2 640.8 286.5 645.0 291.8 655.8 299.8 663.5 303.2 664.8 305.2 664.2 306.5 662.2 306.5 658.8 305.0 654.0 301.2 647.5 294.2 640.2 290.0 638.2ZM166.2 636.5 162.8 637.0 156.8 640.5 141.5 654.2 131.0 668.2 128.2 674.2 128.5 677.2 131.0 677.0 140.2 671.5 151.8 661.5 163.5 646.0 166.2 640.2Z" fill="#f5d164" fill-rule="evenodd"/><path d="M292.0 645.0 291.2 647.8 293.8 653.2 297.2 657.0 300.8 658.0 301.2 654.2 299.0 649.8 295.5 646.0ZM162.5 640.0 160.0 640.2 155.2 643.0 142.5 654.5 133.8 666.2 131.8 670.5 132.0 673.0 135.0 672.5 142.5 668.0 151.8 659.5 160.2 648.2 162.8 642.8Z" fill="#f5d06d" fill-rule="evenodd"/><path d="M158.0 644.5 153.2 646.2 144.5 654.0 137.2 663.5 136.0 668.2 138.2 668.0 142.8 665.5 150.8 658.2 157.2 649.2Z" fill="#f5cf75" fill-rule="evenodd"/><path d="M151.2 652.0 147.8 653.5 143.2 658.5 142.2 661.0 146.5 659.0 149.5 655.8Z" fill="#f5cd7d" fill-rule="evenodd"/><path d="M225.5 588.2 212.5 589.5 201.5 591.5 189.5 594.8 183.5 597.5 164.5 608.5 149.2 618.8 135.0 629.8 121.2 642.0 108.2 661.8 101.5 676.0 97.2 688.0 94.5 698.5 92.2 711.5 91.2 724.2 91.5 738.2 93.0 751.2 95.8 764.2 99.8 777.0 105.5 790.5 112.8 803.5 120.2 814.2 128.0 823.5 139.2 834.5 150.0 843.0 160.8 850.0 173.2 856.5 183.5 860.8 195.2 864.5 210.5 867.8 224.5 869.2 240.2 869.2 251.0 868.2 264.8 865.8 280.8 861.0 292.2 856.2 303.8 850.2 316.0 842.2 328.8 831.8 338.5 821.8 346.8 811.5 354.8 799.2 360.8 787.8 365.8 775.5 370.2 760.0 372.5 747.5 373.8 731.2 373.5 720.2 372.2 708.2 369.2 693.5 366.0 682.8 360.5 669.2 354.0 657.0 347.2 646.8 338.2 635.5 326.5 623.8 315.2 614.8 303.2 607.0 290.5 600.5 278.5 595.8 264.5 591.8 252.5 589.5 239.5 588.2Z" fill="none" stroke="#000" stroke-width="0.9"/><path d="M225.5 588.2 210.8 589.8 197.5 592.5 178.5 602.0 159.5 613.5 143.8 624.8 129.0 637.0 115.2 650.2 104.0 670.2 99.5 681.2 95.5 694.2 91.8 716.2 91.5 738.2 93.0 751.2 95.8 764.2 99.8 777.0 105.5 790.5 112.8 803.5 120.2 814.2 128.0 823.5 139.2 834.5 150.0 843.0 160.8 850.0 173.2 856.5 183.5 860.8 195.2 864.5 210.5 867.8 224.5 869.2 240.2 869.2 251.0 868.2 264.8 865.8 280.8 861.0 292.2 856.2 303.8 850.2 316.0 842.2 328.8 831.8 338.5 821.8 346.8 811.5 354.8 799.2 360.8 787.8 365.8 775.5 370.2 760.0 372.5 747.5 373.8 731.2 373.5 720.2 372.2 708.2 369.2 693.5 366.0 682.8 360.5 669.2 354.0 657.0 347.2 646.8 338.2 635.5 326.5 623.8 315.2 614.8 303.2 607.0 290.5 600.5 278.5 595.8 264.5 591.8 252.5 589.5 239.5 588.2Z" fill="none" stroke="#000" stroke-width="0.9"/><path d="M225.5 588.2 206.2 590.8 185.2 600.2 166.8 610.8 150.8 621.5 136.8 632.5 123.8 644.2 110.5 658.0 101.5 676.0 95.2 695.2 91.8 716.2 91.5 738.2 93.0 751.2 95.8 764.2 99.8 777.0 105.5 790.5 112.8 803.5 120.2 814.2 128.0 823.5 139.2 834.5 150.0 843.0 160.8 850.0 173.2 856.5 183.5 860.8 195.2 864.5 210.5 867.8 224.5 869.2 240.2 869.2 251.0 868.2 264.8 865.8 280.8 861.0 292.2 856.2 303.8 850.2 316.0 842.2 328.8 831.8 338.5 821.8 346.8 811.5 354.8 799.2 360.8 787.8 365.8 775.5 370.2 760.0 372.5 747.5 373.8 731.2 373.5 720.2 372.2 708.2 369.2 693.5 366.0 682.8 360.5 669.2 354.0 657.0 347.2 646.8 338.2 635.5 326.5 623.8 315.2 614.8 303.2 607.0 290.5 600.5 278.5 595.8 264.5 591.8 252.5 589.5 239.5 588.2Z" fill="none" stroke="#000" stroke-width="0.9"/><path d="M219.5 588.8 199.2 595.8 183.8 603.0 167.5 612.2 153.2 621.8 138.0 633.8 127.2 643.5 114.0 657.2 105.2 667.8 101.0 677.2 96.2 691.5 92.0 713.8 91.2 724.2 91.5 738.2 93.0 751.2 95.8 764.2 99.8 777.0 105.5 790.5 116.2 808.5 131.0 826.5 139.2 834.5 150.0 843.0 160.8 850.0 173.2 856.5 183.5 860.8 195.2 864.5 210.5 867.8 224.5 869.2 240.2 869.2 251.0 868.2 264.8 865.8 280.8 861.0 292.2 856.2 303.8 850.2 316.0 842.2 328.8 831.8 338.5 821.8 346.8 811.5 354.8 799.2 360.8 787.8 365.8 775.5 370.2 760.0 372.5 747.5 373.8 731.2 373.5 720.2 372.2 708.2 369.2 693.5 366.0 682.8 360.5 669.2 354.0 657.0 347.2 646.8 338.2 635.5 326.5 623.8 315.2 614.8 303.2 607.0 290.5 600.5 278.5 595.8 264.5 591.8 252.5 589.5 239.5 588.2Z" fill="none" stroke="#000" stroke-width="0.9"/><path d="M239.5 588.2 232.0 588.8 214.2 593.0 200.8 597.5 188.0 603.0 163.2 617.0 149.5 626.8 138.2 636.0 116.8 657.5 100.8 678.2 94.5 698.5 91.5 719.2 91.2 733.2 93.0 751.2 96.5 767.0 101.0 780.2 107.0 791.0 115.0 802.8 135.5 827.8 149.0 842.2 160.8 850.0 173.2 856.5 183.5 860.8 200.2 865.8 210.5 867.8 224.5 869.2 240.2 869.2 254.5 867.8 268.8 864.8 280.8 861.0 292.2 856.2 303.8 850.2 316.0 842.2 326.2 834.0 336.2 824.2 346.8 811.5 354.8 799.2 360.8 787.8 365.8 775.5 369.0 765.0 372.0 751.0 373.5 737.5 373.8 726.2 372.5 710.0 370.0 696.5 366.0 682.8 361.8 672.0 358.2 668.2 357.0 662.5 347.2 646.8 338.2 635.5 329.5 626.5 319.2 617.8 307.0 609.2 293.8 602.0 281.2 596.8 269.5 593.0 255.8 590.0Z" fill="none" stroke="#000" stroke-width="0.9"/><path d="M203.0 764.8 204.0 764.0 206.8 764.5 209.0 767.2 208.8 769.0 206.5 769.8 204.5 768.8 203.0 767.0ZM261.0 591.0 240.0 591.0 211.8 596.8 189.2 604.8 165.5 617.8 150.0 628.8 141.2 636.0 120.2 657.0 112.0 667.0 102.2 681.0 96.0 692.8 92.2 711.5 91.2 729.5 93.8 746.8 96.5 759.0 100.8 772.0 106.0 783.5 113.0 795.2 122.5 808.2 132.8 820.5 143.8 832.5 160.2 848.5 167.2 853.5 179.0 859.0 191.8 863.5 202.5 866.2 224.5 869.2 240.2 869.2 257.5 867.2 271.5 864.0 282.8 860.2 292.2 856.2 307.5 848.0 319.0 840.0 328.8 831.8 340.2 819.8 349.8 807.2 357.0 795.2 362.8 783.2 367.2 771.0 371.0 756.5 373.0 743.2 373.8 731.2 373.2 716.8 371.5 703.8 366.5 684.5 363.5 682.2 356.0 681.0 353.8 678.5 352.5 671.0 352.0 653.8 343.5 641.8 335.8 632.8 326.5 623.8 312.8 613.0 298.2 604.2 287.0 599.0 276.2 595.0Z" fill="none" stroke="#000" stroke-width="0.9"/><path d="M190.5 753.2 194.5 750.8 201.2 750.2 207.2 752.0 215.8 757.5 220.8 763.2 223.8 770.0 224.0 775.0 221.8 780.0 217.8 782.8 212.0 783.5 205.0 781.8 197.2 777.0 192.2 771.8 188.5 764.5 188.0 758.2ZM261.8 595.2 239.0 595.2 221.2 598.2 204.2 602.2 185.0 609.2 164.5 620.8 143.5 636.8 122.8 657.8 112.2 671.0 104.2 683.2 99.5 692.5 96.0 702.5 94.8 709.5 94.8 720.0 99.0 751.5 102.2 764.5 105.8 774.8 115.2 793.2 122.8 804.0 133.8 817.2 160.5 843.8 171.2 851.2 196.2 861.8 200.2 865.8 210.5 867.8 224.5 869.2 240.2 869.2 254.5 867.8 268.8 864.8 280.8 861.0 292.2 856.2 307.5 848.0 319.0 840.0 328.8 831.8 338.5 821.8 348.0 809.8 355.8 797.5 362.0 785.0 367.2 771.0 370.2 760.0 373.5 737.5 373.2 716.8 367.5 699.2 363.8 693.2 361.5 692.0 359.0 691.8 350.0 694.2 347.8 692.0 347.2 681.8 348.8 659.0 348.0 651.8 345.5 644.5 338.2 635.5 334.2 631.8 323.2 623.5 307.8 613.8 283.8 601.5 271.5 597.2Z" fill="none" stroke="#000" stroke-width="0.9"/><path d="M180.5 747.2 183.8 744.0 186.8 742.2 191.8 740.8 196.5 740.5 201.8 741.2 208.5 743.5 219.2 750.0 225.2 755.5 229.2 760.5 233.8 769.8 234.8 778.5 234.0 782.2 231.2 787.2 225.0 791.8 219.8 793.0 214.8 793.0 204.2 790.2 192.8 783.2 184.8 775.0 179.2 765.2 177.8 759.5 177.8 754.0ZM212.8 649.5 219.0 647.0 224.5 647.0 229.2 648.0 237.5 651.8 246.5 659.2 253.2 669.5 255.8 678.0 255.2 686.5 254.0 689.5 251.2 692.8 245.2 695.2 236.5 694.0 227.0 688.8 217.5 680.0 211.8 671.8 208.5 662.5 208.8 655.5 209.8 653.0ZM276.8 603.8 267.8 601.2 259.0 600.0 250.0 599.8 235.0 601.0 197.2 608.0 184.8 612.2 175.0 617.0 165.8 622.5 153.5 631.2 144.2 639.0 132.8 650.2 123.5 660.8 113.5 674.0 106.5 685.5 102.5 694.2 99.8 704.8 99.5 712.5 102.8 742.0 107.8 766.2 114.5 784.8 124.8 801.5 137.2 816.5 151.2 830.2 164.2 841.2 172.0 846.5 179.8 850.2 189.8 853.2 202.8 855.2 242.5 856.2 265.5 856.2 275.2 855.5 284.5 854.0 296.8 850.2 306.5 845.5 316.2 839.2 327.8 830.2 339.2 819.5 347.2 810.8 352.5 803.0 360.8 787.8 364.8 778.2 370.2 760.0 373.0 741.0 367.0 718.8 363.2 708.2 360.2 704.5 358.2 703.8 355.8 704.2 349.0 710.0 342.8 718.8 339.2 722.2 336.8 722.8 335.2 720.5 335.8 711.2 341.0 690.5 344.0 671.2 343.8 657.5 340.5 648.5 336.0 642.5 330.5 637.0 314.2 624.2 294.8 612.0Z" fill="none" stroke="#000" stroke-width="0.9"/><path d="M166.5 741.2 173.2 735.5 184.5 729.8 194.2 726.8 202.8 726.5 211.0 729.2 225.5 740.2 239.8 748.2 244.8 752.8 249.2 760.2 251.5 769.0 251.5 783.8 249.8 790.5 246.2 797.0 242.2 801.2 235.5 805.2 229.0 807.0 220.5 807.2 211.2 805.5 205.0 803.2 191.2 795.5 182.8 788.8 175.8 781.8 169.5 773.5 165.8 766.5 163.0 757.5 162.8 750.2 163.8 746.0ZM137.0 695.5 140.0 698.0 141.8 704.5 142.2 721.2 141.5 730.5 140.0 738.8 137.0 747.8 133.8 753.0 132.0 754.5 129.5 755.2 127.2 754.2 125.0 751.5 122.8 745.0 121.5 733.5 122.0 721.0 123.8 712.0 127.2 703.5 132.2 697.2 134.8 695.8ZM280.0 610.8 269.5 607.8 258.2 607.0 238.5 609.8 230.5 612.0 226.8 614.2 227.0 615.5 233.8 619.5 240.5 625.0 249.0 634.5 260.8 652.5 269.2 670.2 272.8 683.8 273.0 696.2 270.5 707.8 268.2 711.5 265.2 713.5 240.8 713.8 226.5 715.5 219.8 715.2 216.5 714.2 211.0 711.0 206.0 706.2 202.8 701.8 191.5 678.5 181.5 663.5 179.5 657.8 181.2 649.5 186.2 640.0 195.2 627.8 205.5 617.5 205.0 615.8 199.5 614.0 188.8 614.8 178.8 618.2 164.8 626.0 151.2 636.0 134.5 652.0 124.5 663.8 114.5 678.0 108.2 690.2 105.8 699.5 105.8 706.0 109.2 720.2 111.2 743.2 115.8 770.8 118.0 780.2 121.0 788.0 129.2 801.8 143.0 817.5 153.5 827.0 163.5 834.8 173.0 841.0 181.5 845.2 189.2 847.8 198.0 849.2 216.0 849.5 275.5 847.0 287.8 845.2 296.2 842.8 305.5 838.5 314.0 833.2 325.8 824.0 334.8 815.2 349.5 797.0 356.0 786.5 360.5 777.2 364.5 764.5 365.2 753.0 364.2 746.5 358.8 730.0 355.5 725.0 353.2 724.8 349.5 728.0 338.8 744.2 329.2 753.8 325.5 755.8 322.8 756.0 320.0 754.0 318.8 751.0 318.2 740.8 320.5 727.5 324.5 715.8 332.2 698.2 337.5 680.2 338.2 668.2 336.0 658.8 332.2 652.2 327.8 646.5 312.0 631.0 295.5 618.8Z" fill="none" stroke="#000" stroke-width="0.9"/><path d="M128.0 781.5 127.5 786.8 128.2 790.0 132.8 799.2 140.2 809.0 154.5 822.2 169.5 832.2 184.0 838.5 195.0 840.0 198.5 839.2 200.8 837.5 200.8 831.0 196.0 822.0 184.5 809.2 173.2 799.8 160.2 790.8 146.0 783.2 139.8 781.0 133.2 779.8 130.2 779.8ZM350.8 759.0 349.0 758.2 345.8 758.5 339.0 762.5 327.5 772.5 310.8 790.2 303.5 800.5 296.8 813.5 293.8 823.2 293.8 826.8 295.2 829.0 299.2 830.2 303.2 829.8 307.8 828.2 314.8 824.5 327.0 814.8 338.0 802.5 348.0 787.0 352.8 775.2 353.8 770.5 353.8 764.2 352.8 761.2ZM236.0 727.5 236.0 729.2 237.0 730.5 239.5 731.5 242.5 731.5 246.2 730.0 248.0 727.2 246.2 724.8 241.0 724.2 237.8 725.5ZM173.0 683.0 168.8 683.8 164.5 686.8 161.0 692.0 158.8 699.8 158.8 707.8 161.0 714.2 164.5 718.0 168.8 719.5 174.8 718.5 178.8 716.0 182.0 712.2 184.8 704.2 184.5 696.5 182.2 690.0 178.8 685.5 176.0 683.8ZM184.5 623.0 180.2 622.5 177.2 623.2 165.0 629.2 150.2 640.2 137.0 653.2 124.0 669.5 116.0 683.2 113.5 691.5 113.8 695.8 115.5 698.2 117.8 698.8 121.0 697.2 131.5 687.2 146.5 677.8 156.0 669.0 166.5 655.5 177.5 638.8 184.8 626.0ZM268.5 618.5 267.0 620.5 266.8 624.5 270.0 638.2 277.5 654.2 287.5 669.2 297.8 680.2 306.2 686.5 315.5 690.0 319.5 689.8 322.0 688.5 324.0 686.2 326.0 681.0 325.8 670.2 322.2 659.5 318.2 651.8 312.5 643.2 300.0 630.0 288.2 621.8 276.8 617.5 272.2 617.2Z" fill="none" stroke="#000" stroke-width="0.9"/><path d="M142.0 797.5 142.0 800.5 145.0 805.8 151.2 812.5 156.5 816.8 163.2 821.0 170.0 823.8 174.8 824.0 176.8 822.8 177.0 819.5 174.5 814.8 169.5 809.2 163.2 804.2 158.5 801.2 149.2 797.2 143.2 796.8ZM338.5 780.0 336.0 779.8 332.0 781.8 321.5 792.0 317.8 797.2 314.0 804.5 313.0 808.0 313.0 810.5 314.0 811.8 316.5 812.0 322.2 809.0 332.0 799.2 338.5 788.0 339.5 784.2 339.5 781.8ZM284.5 634.0 282.8 636.8 283.0 642.5 285.8 650.0 290.0 657.0 294.8 662.8 299.8 667.0 304.5 669.2 308.5 668.8 310.2 665.5 309.8 659.8 308.0 654.8 302.8 645.8 296.0 638.2 291.5 635.0 287.2 633.5ZM170.0 633.8 166.5 633.8 159.8 637.2 151.8 643.2 142.5 652.0 135.0 660.8 128.8 669.8 125.2 677.0 124.8 679.8 125.5 681.2 129.0 680.5 145.5 669.2 153.0 662.0 165.2 646.0 169.2 638.2Z" fill="none" stroke="#000" stroke-width="0.9"/></g><text transform="translate(227,599) rotate(0)" font-size="8.5" text-anchor="middle">-0.04</text><text transform="translate(270,617) rotate(0)" font-size="8.5" text-anchor="middle">0.02</text><text transform="translate(306,617) rotate(25)" font-size="8.5" text-anchor="middle">0.02</text><text transform="translate(291,632) rotate(15)" font-size="8.5" text-anchor="middle">0.04</text><text transform="translate(176,637) rotate(-35)" font-size="8.5" text-anchor="middle">0.02</text><text transform="translate(125,680) rotate(-45)" font-size="8.5" text-anchor="middle">0.04</text><text transform="translate(176,685) rotate(0)" font-size="8.5" text-anchor="middle">0.02</text><text transform="translate(261,706) rotate(0)" font-size="8.5" text-anchor="middle">-0.02</text><text transform="translate(133,750) rotate(0)" font-size="8.5" text-anchor="middle">0</text><text transform="translate(202,743) rotate(0)" font-size="8.5" text-anchor="middle">-0.02</text><text transform="translate(211,784) rotate(0)" font-size="8.5" text-anchor="middle">-0.04</text><text transform="translate(148,799) rotate(0)" font-size="8.5" text-anchor="middle">0.04</text><text transform="translate(311,786) rotate(-40)" font-size="8.5" text-anchor="middle">0.02</text><text transform="translate(319,815) rotate(-30)" font-size="8.5" text-anchor="middle">0.04</text><text transform="translate(182,838) rotate(0)" font-size="8.5" text-anchor="middle">0.02</text><text transform="translate(224,808) rotate(0)" font-size="8.5" text-anchor="middle">0</text><text transform="translate(204,849) rotate(0)" font-size="8.5" text-anchor="middle">0</text><text transform="translate(307,843) rotate(-25)" font-size="8.5" text-anchor="middle">-0.02</text><text transform="translate(218,864) rotate(0)" font-size="8.5" text-anchor="middle">-0.02</text><text transform="translate(242,867) rotate(0)" font-size="8.5" text-anchor="middle">0</text><rect x="69.5" y="587.5" width="325.5" height="282" fill="none" stroke="#000"/><line x1="91.3" y1="870" x2="91.3" y2="880" stroke="#000"/><text x="91.3" y="905" font-size="16" text-anchor="middle">-1.0</text><line x1="59.5" y1="869.6" x2="69.5" y2="869.6" stroke="#000"/><text transform="translate(50,869.6) rotate(-90)" font-size="16" text-anchor="middle">-1.0</text><line x1="161.9" y1="870" x2="161.9" y2="880" stroke="#000"/><text x="161.9" y="905" font-size="16" text-anchor="middle">-0.5</text><line x1="59.5" y1="799.2" x2="69.5" y2="799.2" stroke="#000"/><text transform="translate(50,799.2) rotate(-90)" font-size="16" text-anchor="middle">-0.5</text><line x1="232.6" y1="870" x2="232.6" y2="880" stroke="#000"/><text x="232.6" y="905" font-size="16" text-anchor="middle">0.0</text><line x1="59.5" y1="728.9" x2="69.5" y2="728.9" stroke="#000"/><text transform="translate(50,728.9) rotate(-90)" font-size="16" text-anchor="middle">0.0</text><line x1="303.2" y1="870" x2="303.2" y2="880" stroke="#000"/><text x="303.2" y="905" font-size="16" text-anchor="middle">0.5</text><line x1="59.5" y1="658.5" x2="69.5" y2="658.5" stroke="#000"/><text transform="translate(50,658.5) rotate(-90)" font-size="16" text-anchor="middle">0.5</text><line x1="373.9" y1="870" x2="373.9" y2="880" stroke="#000"/><text x="373.9" y="905" font-size="16" text-anchor="middle">1.0</text><line x1="59.5" y1="588.2" x2="69.5" y2="588.2" stroke="#000"/><text transform="translate(50,588.2) rotate(-90)" font-size="16" text-anchor="middle">1.0</text><text x="231.5" y="941.5" font-size="17" text-anchor="middle">X</text><text transform="translate(14.5,730.5) rotate(-90)" font-size="17" text-anchor="middle">Y</text><text x="233" y="559" font-size="19.5" font-weight="bold" text-anchor="middle">Wavefront map of Interferogram</text></svg></div></div>
<div class="win ac" style="left:872px;top:350px;width:420px;height:598px"><div class="tb"><svg class="ico" viewBox="0 0 16 16"><text x="1" y="14" font-family="Liberation Serif" font-weight="bold" font-size="17" fill="#C9D4F4" stroke="#1A2A9A" stroke-width="1">R</text></svg><div class="ttl">R Graphics: Device 5 (ACTIVE)</div><div class="bt" style="right:52px"><div class="a" style="left:5px;top:13px;width:7px;height:3px;background:#fff"></div></div><div class="bt" style="right:29px"><div class="a" style="left:4px;top:4px;width:11px;height:11px;border:1px solid #fff;border-top-width:3px"></div></div><div class="bt cl" style="right:6px"><svg class="a" style="left:4px;top:4px" width="11" height="11"><path d="M1 1L10 10M10 1L1 10" stroke="#fff" stroke-width="2"/></svg></div></div><div class="mn"><span style="left:6px">File</span><span style="left:34px">History</span><span style="left:79px">Resize</span></div><div class="ct" style=""><svg class="a" style="left:-876px;top:-399px" width="1280" height="965" font-family="Liberation Sans"><line x1="960.5" y1="474" x2="960.5" y2="852" stroke="#D8D8D8" stroke-width="1" stroke-dasharray="1 2"/><line x1="950" y1="839.5" x2="1250" y2="839.5" stroke="#D8D8D8" stroke-width="1" stroke-dasharray="1 2"/><line x1="1016.2" y1="474" x2="1016.2" y2="852" stroke="#D8D8D8" stroke-width="1" stroke-dasharray="1 2"/><line x1="950" y1="769.0" x2="1250" y2="769.0" stroke="#D8D8D8" stroke-width="1" stroke-dasharray="1 2"/><line x1="1071.9" y1="474" x2="1071.9" y2="852" stroke="#D8D8D8" stroke-width="1" stroke-dasharray="1 2"/><line x1="950" y1="698.5" x2="1250" y2="698.5" stroke="#D8D8D8" stroke-width="1" stroke-dasharray="1 2"/><line x1="1127.6" y1="474" x2="1127.6" y2="852" stroke="#D8D8D8" stroke-width="1" stroke-dasharray="1 2"/><line x1="950" y1="628.0" x2="1250" y2="628.0" stroke="#D8D8D8" stroke-width="1" stroke-dasharray="1 2"/><line x1="1183.3" y1="474" x2="1183.3" y2="852" stroke="#D8D8D8" stroke-width="1" stroke-dasharray="1 2"/><line x1="950" y1="557.5" x2="1250" y2="557.5" stroke="#D8D8D8" stroke-width="1" stroke-dasharray="1 2"/><line x1="1239.0" y1="474" x2="1239.0" y2="852" stroke="#D8D8D8" stroke-width="1" stroke-dasharray="1 2"/><line x1="950" y1="487.0" x2="1250" y2="487.0" stroke="#D8D8D8" stroke-width="1" stroke-dasharray="1 2"/><rect x="949.5" y="473.5" width="301" height="379" fill="none" stroke="#000" stroke-width="1"/><line x1="960.5" y1="853" x2="960.5" y2="864" stroke="#000"/><text x="960.5" y="888" font-size="16" text-anchor="middle">0.0</text><line x1="939" y1="839.5" x2="949.5" y2="839.5" stroke="#000"/><text transform="translate(930,839.5) rotate(-90)" font-size="16" text-anchor="middle">0.0</text><line x1="1016.2" y1="853" x2="1016.2" y2="864" stroke="#000"/><text x="1016.2" y="888" font-size="16" text-anchor="middle">0.2</text><line x1="939" y1="769.0" x2="949.5" y2="769.0" stroke="#000"/><text transform="translate(930,769.0) rotate(-90)" font-size="16" text-anchor="middle">0.2</text><line x1="1071.9" y1="853" x2="1071.9" y2="864" stroke="#000"/><text x="1071.9" y="888" font-size="16" text-anchor="middle">0.4</text><line x1="939" y1="698.5" x2="949.5" y2="698.5" stroke="#000"/><text transform="translate(930,698.5) rotate(-90)" font-size="16" text-anchor="middle">0.4</text><line x1="1127.6" y1="853" x2="1127.6" y2="864" stroke="#000"/><text x="1127.6" y="888" font-size="16" text-anchor="middle">0.6</text><line x1="939" y1="628.0" x2="949.5" y2="628.0" stroke="#000"/><text transform="translate(930,628.0) rotate(-90)" font-size="16" text-anchor="middle">0.6</text><line x1="1183.3" y1="853" x2="1183.3" y2="864" stroke="#000"/><text x="1183.3" y="888" font-size="16" text-anchor="middle">0.8</text><line x1="939" y1="557.5" x2="949.5" y2="557.5" stroke="#000"/><text transform="translate(930,557.5) rotate(-90)" font-size="16" text-anchor="middle">0.8</text><line x1="1239.0" y1="853" x2="1239.0" y2="864" stroke="#000"/><text x="1239.0" y="888" font-size="16" text-anchor="middle">1.0</text><line x1="939" y1="487.0" x2="949.5" y2="487.0" stroke="#000"/><text transform="translate(930,487.0) rotate(-90)" font-size="16" text-anchor="middle">1.0</text><text x="1099.5" y="924" font-size="15.5" text-anchor="middle">relative frequency</text><text transform="translate(894,663) rotate(-90)" font-size="15.5" text-anchor="middle">mtf</text><text x="1099.5" y="445.5" font-size="19.8" font-weight="bold" text-anchor="middle">MTF vs. ideal</text><polyline points="960.5,487.0 964.0,492.7 967.6,498.4 971.1,504.0 974.6,509.7 978.1,515.4 981.7,521.1 985.2,526.7 988.7,532.4 992.2,538.0 995.8,543.7 999.3,549.3 1002.8,554.9 1006.3,560.5 1009.9,566.1 1013.4,571.7 1016.9,577.3 1020.4,582.8 1024.0,588.4 1027.5,593.9 1031.0,599.4 1034.5,604.9 1038.1,610.4 1041.6,615.8 1045.1,621.2 1048.6,626.6 1052.2,632.0 1055.7,637.4 1059.2,642.7 1062.7,648.0 1066.3,653.2 1069.8,658.5 1073.3,663.7 1076.8,668.9 1080.4,674.0 1083.9,679.1 1087.4,684.2 1090.9,689.2 1094.5,694.2 1098.0,699.2 1101.5,704.1 1105.0,709.0 1108.6,713.8 1112.1,718.6 1115.6,723.4 1119.1,728.1 1122.7,732.7 1126.2,737.3 1129.7,741.8 1133.2,746.3 1136.8,750.8 1140.3,755.1 1143.8,759.4 1147.3,763.7 1150.9,767.9 1154.4,772.0 1157.9,776.0 1161.4,780.0 1165.0,783.9 1168.5,787.7 1172.0,791.4 1175.5,795.1 1179.1,798.7 1182.6,802.1 1186.1,805.5 1189.6,808.8 1193.2,812.0 1196.7,815.0 1200.2,818.0 1203.7,820.8 1207.3,823.5 1210.8,826.1 1214.3,828.5 1217.8,830.7 1221.4,832.8 1224.9,834.7 1228.4,836.4 1231.9,837.8 1235.5,838.9 1239.0,839.5" fill="none" stroke="#000" stroke-width="1" stroke-dasharray="5 4"/><polyline points="960.5,487.0 962.8,492.1 965.2,497.3 967.5,502.6 969.9,507.9 972.2,513.3 974.5,518.7 976.9,524.3 979.2,530.0 981.6,535.9 983.9,541.7 986.2,547.4 988.6,553.0 990.9,558.6 993.3,564.1 995.6,569.6 997.9,575.1 1000.3,580.4 1002.6,585.5 1005.0,590.4 1007.3,595.2 1009.6,599.9 1012.0,604.5 1014.3,608.9 1016.7,613.3 1019.0,617.7 1021.3,622.0 1023.7,626.2 1026.0,630.4 1028.4,634.5 1030.7,638.5 1033.1,642.5 1035.4,646.4 1037.7,650.2 1040.1,654.0 1042.4,657.7 1044.8,661.4 1047.1,665.0 1049.4,668.5 1051.8,672.0 1054.1,675.3 1056.5,678.6 1058.8,681.7 1061.1,684.7 1063.5,687.6 1065.8,690.3 1068.2,692.8 1070.5,695.2 1072.8,697.6 1075.2,699.9 1077.5,702.0 1079.9,704.1 1082.2,706.0 1084.5,707.7 1086.9,709.3 1089.2,710.8 1091.6,712.1 1093.9,713.4 1096.2,714.6 1098.6,715.9 1100.9,717.3 1103.3,718.7 1105.6,720.2 1107.9,721.6 1110.3,723.1 1112.6,724.6 1115.0,726.2 1117.3,727.8 1119.6,729.6 1122.0,731.4 1124.3,733.3 1126.7,735.5 1129.0,737.9 1131.3,740.4 1133.7,743.1 1136.0,745.8 1138.4,748.6 1140.7,751.3 1143.0,754.1 1145.4,757.0 1147.7,760.0 1150.1,763.0 1152.4,766.0 1154.7,769.0 1157.1,772.0 1159.4,774.9 1161.8,777.7 1164.1,780.5 1166.4,783.2 1168.8,786.0 1171.1,788.7 1173.5,791.4 1175.8,794.0 1178.2,796.5 1180.5,799.0 1182.8,801.3 1185.2,803.6 1187.5,805.8 1189.9,807.9 1192.2,810.0 1194.5,812.1 1196.9,814.0 1199.2,816.0 1201.6,817.8 1203.9,819.6 1206.2,821.4 1208.6,823.1 1210.9,824.8 1213.3,826.4 1215.6,828.0 1217.9,829.5 1220.3,830.9 1222.6,832.2 1225.0,833.5 1227.3,834.6 1229.6,835.7 1232.0,836.8 1234.3,837.8 1236.7,838.7 1239.0,839.5" fill="none" stroke="#000" stroke-width="1.2"/><polyline points="961.3,487.6 963.6,492.7 966.0,497.9 968.3,503.2 970.7,508.5 973.0,513.9 975.3,519.3 977.7,524.9 980.0,530.6 982.4,536.5 984.7,542.3 987.0,548.0 989.4,553.6 991.7,559.2 994.1,564.7 996.4,570.2 998.7,575.7 1001.1,581.0 1003.4,586.1 1005.8,591.0 1008.1,595.8 1010.4,600.5 1012.8,605.1 1015.1,609.5 1017.5,613.9 1019.8,618.3 1022.1,622.6 1024.5,626.8 1026.8,631.0 1029.2,635.1 1031.5,639.1 1033.9,643.1 1036.2,647.0 1038.5,650.8 1040.9,654.6 1043.2,658.3 1045.6,662.0 1047.9,665.6 1050.2,669.1 1052.6,672.6 1054.9,675.9 1057.3,679.2 1059.6,682.3 1061.9,685.3 1064.3,688.2 1066.6,690.9 1069.0,693.4 1071.3,695.8 1073.6,698.2 1076.0,700.5 1078.3,702.6 1080.7,704.7 1083.0,706.6 1085.3,708.3 1087.7,709.9 1090.0,711.4 1092.4,712.7 1094.7,714.0 1097.0,715.2 1099.4,716.5 1101.7,717.9 1104.1,719.3 1106.4,720.8 1108.7,722.2 1111.1,723.7 1113.4,725.2 1115.8,726.8 1118.1,728.4 1120.4,730.2 1122.8,732.0" fill="none" stroke="#000" stroke-width="0.8"/></svg></div></div></body></html>
